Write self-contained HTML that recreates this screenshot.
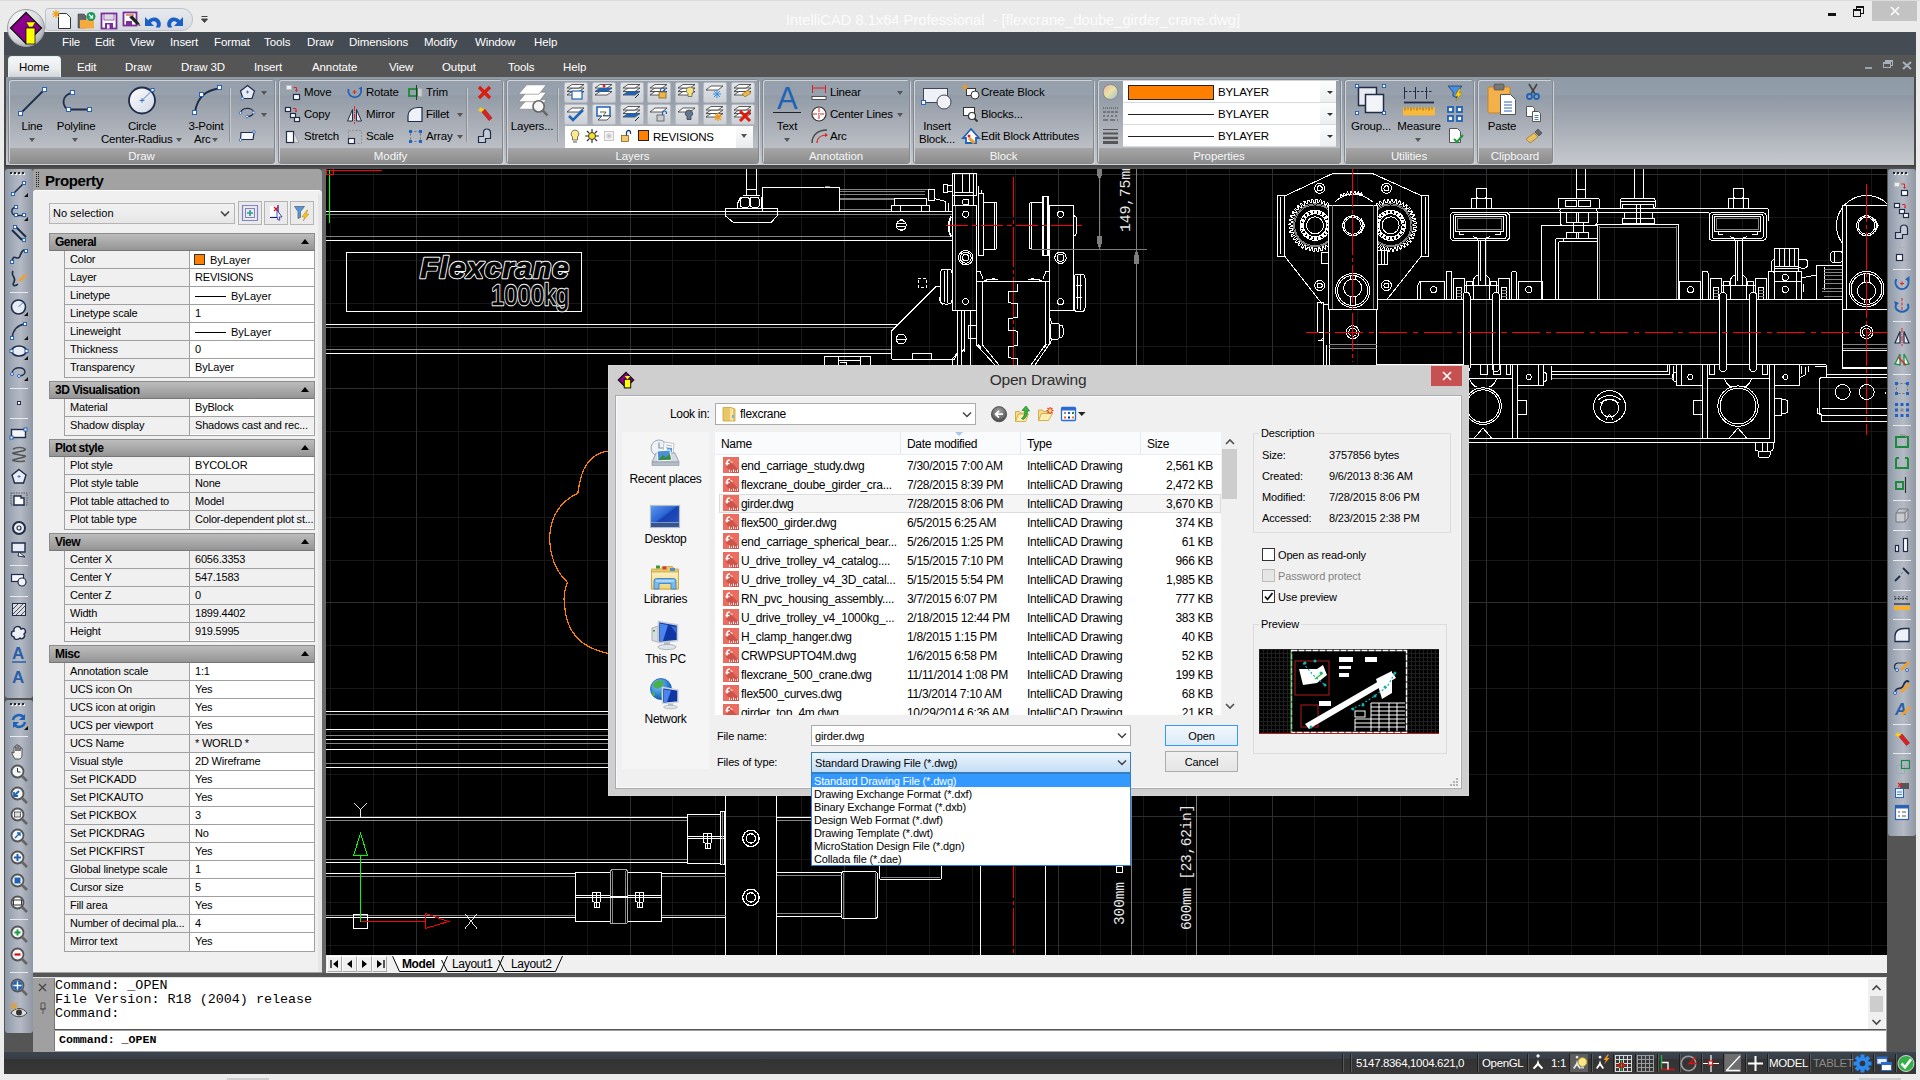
<!DOCTYPE html>
<html lang="en"><head><meta charset="utf-8"><title>IntelliCAD 8.1x64 Professional - [flexcrane_doube_girder_crane.dwg]</title>
<style>
*{box-sizing:border-box;margin:0;padding:0}
html,body{width:1920px;height:1080px;overflow:hidden;background:#ececec;font-family:"Liberation Sans",sans-serif;font-size:12px;color:#000}
.a{position:absolute}
.t{position:absolute;white-space:nowrap;line-height:1}
svg{position:absolute;overflow:visible}
#title{left:0;top:0;width:1920px;height:32px;background:#ebebeb;border-top:1px solid #dcdcdc}
#title .tt{left:0;width:2026px;top:12px;text-align:center;font-size:14.7px;color:#fbfbfb}
#menubar{left:4px;top:32px;width:1912px;height:23px;background:#444b53}
#menubar .t{top:5px;font-size:11.5px;letter-spacing:-0.1px;color:#fff}
#tabrow{left:4px;top:55px;width:1912px;height:23px;background:#555}
#tabrow .t{top:7px;font-size:11.5px;letter-spacing:-0.1px;color:#fff}
#ribbon{left:4px;top:77px;width:1910px;height:88px;background:linear-gradient(#8f9aa7 0%,#939eab 20%,#8e98a4 21.5%,#a2a8b1 49%,#b6bac1 77%,#c6c9cd 100%)}
.pnl{position:absolute;top:2px;height:85px;border:1px solid #848990;border-radius:3px;box-shadow:1px 1px 0 #cfd3d8,inset 1px 1px 0 #cfd3d8;background:linear-gradient(rgba(255,255,255,.04),rgba(255,255,255,.04) 68px,#a6a6a7 68px,#8c8c8d 100%)}
.pnl .lbl{position:absolute;left:0;right:0;bottom:1px;text-align:center;color:#f6f6f6;font-size:11.5px;letter-spacing:-0.1px;line-height:1}
.rt{position:absolute;white-space:nowrap;line-height:1;font-size:11.5px;letter-spacing:-0.2px;color:#000}
.dd{position:absolute;width:0;height:0;border-left:3.5px solid transparent;border-right:3.5px solid transparent;border-top:4px solid #555}
</style></head><body>
<div id="title" class="a"><div class="t tt">IntelliCAD 8.1x64 Professional&nbsp; - [flexcrane_doube_girder_crane.dwg]</div>
<div class="a" style="left:1828px;top:12px;width:8px;height:3px;background:#111"></div>
<div class="a" style="left:1856px;top:5px;width:8px;height:8px;border:1px solid #111;border-top-width:2px"></div>
<div class="a" style="left:1853px;top:8px;width:8px;height:8px;border:1px solid #111;border-top-width:2px;background:#ebebeb"></div>
<div class="a" style="left:1872px;top:0px;width:45px;height:20px;background:#c3c3c3"></div>
<svg style="left:1890px;top:5px" width="10" height="10"><path d="M1 1L9 9M9 1L1 9" stroke="#fff" stroke-width="1.500"/></svg>
<div class="a" style="left:45px;top:7px;width:148px;height:23px;background:linear-gradient(#e6e9ed,#d6dae0);border:1px solid #bfc4ca;border-radius:3px 11px 11px 3px"></div>
<svg style="left:52px;top:8px" width="160" height="22">
<path d="M6.500 4.500h8l4 4v11h-12z" fill="#fff" stroke="#333" stroke-width="1"/><path d="M4 1v8M0 5h8M1.200 2.200l5.600 5.600M6.800 2.200L1.200 7.800" stroke="#f5a01c" stroke-width="1.200"/>
<path d="M26 5h6l2 2v12h-8z" fill="#666" stroke="#444" stroke-width="0.600"/><path d="M28 11h14v8.500H28z" fill="#f4aa3c"/><circle cx="39" cy="7.500" r="4.500" fill="#1c9a5c"/><path d="M37 5.500l3.500 3.500M40.500 6v3h-3" fill="none" stroke="#fff" stroke-width="1.200"/>
<rect x="49.500" y="4.500" width="15" height="15" fill="#fff" stroke="#7a2c9a" stroke-width="1.800"/><rect x="52" y="5" width="10" height="6" fill="#fff" stroke="#7a2c9a" stroke-width="0.800"/><path d="M53 7h8M53 9h8" stroke="#999" stroke-width="0.700"/><rect x="53" y="14" width="8" height="6" fill="#7a2c9a"/><rect x="55" y="15.500" width="2.500" height="4" fill="#fff"/>
<rect x="71.500" y="3.500" width="13" height="13" fill="#fff" stroke="#7a2c9a" stroke-width="1.800"/><path d="M74 6h8" stroke="#c05a1c" stroke-width="1.200"/><rect x="74" y="12" width="6" height="5" fill="#7a2c9a"/><path d="M77 8l8 8l2.500-1.500l-7-8z" fill="#222"/><path d="M85 16l2.500-1.500l1 2.500z" fill="#555"/>
<path d="M93 8v9h9l-3.200-3.200c1.500-2.200 4.500-2.200 5.700 0c0.800 1.600 0.300 3.200-0.800 4.700h4.300c1.500-3 1-6-1-8c-3-3-8-2.500-10.800 0.700z" fill="#1a5fc8"/>
<path d="M131 8v9h-9l3.200-3.200c-1.500-2.200-4.500-2.200-5.700 0c-0.800 1.600-0.300 3.200 0.800 4.700h-4.300c-1.500-3-1-6 1-8c3-3 8-2.500 10.800 0.700z" fill="#1a5fc8"/>
<path d="M149.500 7.500h6M149.500 10h6l-3 3.500z" fill="#444" stroke="#444" stroke-width="1"/>
</svg>
</div>
<div id="menubar" class="a">
<div class="t" style="left:58px">File</div><div class="t" style="left:91px">Edit</div><div class="t" style="left:126px">View</div><div class="t" style="left:166px">Insert</div><div class="t" style="left:210px">Format</div><div class="t" style="left:260px">Tools</div><div class="t" style="left:303px">Draw</div><div class="t" style="left:345px">Dimensions</div><div class="t" style="left:420px">Modify</div><div class="t" style="left:471px">Window</div><div class="t" style="left:530px">Help</div>
</div>
<div id="tabrow" class="a">
<div class="a" style="left:4px;top:1px;width:53px;height:22px;background:linear-gradient(#f6f7f8,#e8eaec 60%,#cdd1d6);border:1px solid #d9f3f3;border-bottom:0;border-radius:4px 4px 0 0"></div>
<div class="t" style="left:15px;color:#000">Home</div><div class="t" style="left:73px">Edit</div><div class="t" style="left:121px">Draw</div><div class="t" style="left:177px">Draw 3D</div><div class="t" style="left:250px">Insert</div><div class="t" style="left:308px">Annotate</div><div class="t" style="left:385px">View</div><div class="t" style="left:438px">Output</div><div class="t" style="left:504px">Tools</div><div class="t" style="left:559px">Help</div>
<div class="a" style="left:1861px;top:12px;width:7px;height:2px;background:#9aa2ad"></div>
<div class="a" style="left:1881px;top:5px;width:8px;height:6px;border:1px solid #a8b0bc;border-top-width:2px"></div><div class="a" style="left:1879px;top:7px;width:8px;height:6px;border:1px solid #a8b0bc;border-top-width:2px;background:#555"></div>
<svg style="left:1898px;top:6px" width="10" height="9"><path d="M1 1L9 8M9 1L1 8" stroke="#a8b0bc" stroke-width="2.200"/></svg>
</div>
<svg style="left:6px;top:8px" width="40" height="40"><defs><radialGradient id="orb" cx="0.35" cy="0.3" r="0.9"><stop offset="0" stop-color="#fff"/><stop offset="0.55" stop-color="#d8dadd"/><stop offset="1" stop-color="#8a8e94"/></radialGradient></defs><circle cx="20" cy="20" r="18.500" fill="url(#orb)" stroke="#9a9ea4" stroke-width="1"/><path d="M20 4.500L35.500 20L20 35.500L4.500 20Z" fill="#8b008b" stroke="#111" stroke-width="1.300"/><path d="M27 23v10l-4 3z" fill="#e8e8e8"/><path d="M20 14h9.500l-3 5h-3.500z" fill="#ff0" stroke="#111" stroke-width="0.500"/><rect x="20" y="20" width="9" height="16" fill="#ff0" stroke="#111" stroke-width="0.800"/></svg>
<div id="ribbon" class="a">
<div class="pnl" style="left:4px;width:267px"><div class="lbl">Draw</div></div>
<div class="pnl" style="left:274px;width:225px"><div class="lbl">Modify</div></div>
<div class="pnl" style="left:502px;width:253px"><div class="lbl">Layers</div></div>
<div class="pnl" style="left:758px;width:148px"><div class="lbl">Annotation</div></div>
<div class="pnl" style="left:909px;width:181px"><div class="lbl">Block</div></div>
<div class="pnl" style="left:1093px;width:244px"><div class="lbl">Properties</div></div>
<div class="pnl" style="left:1340px;width:130px"><div class="lbl">Utilities</div></div>
<div class="pnl" style="left:1473px;width:76px"><div class="lbl">Clipboard</div></div>
<div class="rt" style="left:-32px;width:120px;text-align:center;top:44px">Line</div>
<div class="dd" style="left:25px;top:61px"></div>
<div class="rt" style="left:12px;width:120px;text-align:center;top:44px">Polyline</div>
<div class="dd" style="left:68px;top:61px"></div>
<div class="rt" style="left:78px;width:120px;text-align:center;top:44px">Circle</div>
<div class="rt" style="left:97px;top:57px;">Center-Radius</div>
<div class="dd" style="left:172px;top:61px"></div>
<div class="rt" style="left:142px;width:120px;text-align:center;top:44px">3-Point</div>
<div class="rt" style="left:190px;top:57px;">Arc</div>
<div class="dd" style="left:208px;top:61px"></div>
<div class="a" style="left:225px;top:11px;width:1px;height:54px;background:#8b9199"></div><div class="a" style="left:226px;top:11px;width:1px;height:54px;background:#c5c8cc"></div>
<div class="dd" style="left:257px;top:14px"></div>
<div class="dd" style="left:257px;top:36px"></div>
<svg style="left:13px;top:9px" width="32" height="32"><path d="M3.5 27.5L28 3" stroke="#1f2d4a" stroke-width="1.8" fill="none"/><rect x="1.5" y="25.5" width="4" height="4" fill="#fff" stroke="#2a62b8" stroke-width="1"/><rect x="25.5" y="1.5" width="4" height="4" fill="#fff" stroke="#2a62b8" stroke-width="1"/></svg>
<svg style="left:55px;top:11px" width="36" height="26"><path d="M13.5 5 C2 6 2 21 11 21.5 L31 21.5" stroke="#1f2d4a" stroke-width="1.8" fill="none"/><rect x="11.500" y="2.500" width="4" height="4" fill="#fff" stroke="#2a62b8" stroke-width="1"/><rect x="7.500" y="19.500" width="4" height="4" fill="#fff" stroke="#2a62b8" stroke-width="1"/><rect x="28.500" y="19.500" width="4" height="4" fill="#fff" stroke="#2a62b8" stroke-width="1"/></svg>
<svg style="left:123px;top:8px" width="32" height="32"><defs><linearGradient id="cg" x1="0" y1="0" x2="1" y2="1"><stop offset="0" stop-color="#fff"/><stop offset="1" stop-color="#cfd6e4"/></linearGradient></defs><circle cx="15" cy="15.500" r="13" fill="url(#cg)" stroke="#1f2d4a" stroke-width="1.8"/><path d="M15 15.500L25 5.500" stroke="#2a62b8" stroke-width="0.800"/><path d="M12.500 15.500h5M15 13v5" stroke="#2a62b8" stroke-width="0.800"/><rect x="24" y="3.500" width="3" height="3" fill="#fff" stroke="#2a62b8" stroke-width="1"/></svg>
<svg style="left:186px;top:8px" width="34" height="34"><path d="M5 27 C7 14 14 5 30 3.500" stroke="#1f2d4a" stroke-width="1.800" fill="none"/><rect x="2.500" y="25.500" width="4" height="4" fill="#fff" stroke="#2a62b8" stroke-width="1"/><rect x="9.500" y="7.500" width="4" height="4" fill="#fff" stroke="#2a62b8" stroke-width="1"/><rect x="27.500" y="0.500" width="4" height="4" fill="#fff" stroke="#2a62b8" stroke-width="1"/></svg>
<svg style="left:234px;top:7px" width="20" height="18"><path d="M9.500 1.500L16.500 7L14 14.500H5L2.500 7Z" fill="#e8ecf4" stroke="#1f2d4a" stroke-width="1.200"/><path d="M8 8h3M9.500 6.500v3" stroke="#2a62b8" stroke-width="0.800"/><circle cx="4.500" cy="14.500" r="1.300" fill="#fff" stroke="#2a62b8" stroke-width="0.800"/></svg>
<svg style="left:234px;top:29px" width="20" height="14"><path d="M3 7C3 1 15 1 15.500 6C16 9 12 10.500 9 10.500" fill="none" stroke="#1f2d4a" stroke-width="1.200"/><circle cx="2.500" cy="7" r="1.300" fill="#fff" stroke="#2a62b8" stroke-width="0.800"/><circle cx="15.500" cy="6.500" r="1.300" fill="#fff" stroke="#2a62b8" stroke-width="0.800"/><circle cx="9" cy="10.500" r="1.300" fill="#fff" stroke="#2a62b8" stroke-width="0.800"/></svg>
<svg style="left:234px;top:52px" width="20" height="14"><path d="M3 3.500H16L15 10.500H2.500Z" fill="#f4f6fa" stroke="#1f2d4a" stroke-width="1.200"/><circle cx="16" cy="3" r="1.300" fill="#fff" stroke="#2a62b8" stroke-width="0.800"/><circle cx="2.500" cy="11" r="1.300" fill="#fff" stroke="#2a62b8" stroke-width="0.800"/></svg>
<div class="rt" style="left:300px;top:10px;">Move</div>
<div class="rt" style="left:300px;top:32px;">Copy</div>
<div class="rt" style="left:300px;top:54px;">Stretch</div>
<div class="rt" style="left:362px;top:10px;">Rotate</div>
<div class="rt" style="left:362px;top:32px;">Mirror</div>
<div class="rt" style="left:362px;top:54px;">Scale</div>
<div class="rt" style="left:422px;top:10px;">Trim</div>
<div class="rt" style="left:422px;top:32px;">Fillet</div>
<div class="rt" style="left:422px;top:54px;">Array</div>
<div class="dd" style="left:453px;top:36px"></div>
<div class="dd" style="left:453px;top:58px"></div>
<div class="a" style="left:462px;top:11px;width:1px;height:54px;background:#8b9199"></div><div class="a" style="left:463px;top:11px;width:1px;height:54px;background:#c5c8cc"></div>
<svg style="left:281px;top:7px" width="18" height="18"><rect x="1.500" y="1.500" width="5" height="4" fill="#eee" stroke="#bbb" stroke-width="0.800"/><rect x="8.500" y="10.500" width="6" height="5" fill="#fff" stroke="#1f2d4a" stroke-width="1.200"/><path d="M8.500 3.500h3v3" fill="none" stroke="#d22" stroke-width="1"/><path d="M10 6l1.500 2l1.500-2z" fill="#d22"/></svg>
<svg style="left:280px;top:28px" width="20" height="20"><rect x="1.500" y="2.500" width="5" height="4" fill="#fff" stroke="#1f2d4a" stroke-width="1.200"/><rect x="6.500" y="8.500" width="5" height="4" fill="#fff" stroke="#1f2d4a" stroke-width="1.200"/><rect x="10.500" y="12.500" width="5" height="4" fill="#fff" stroke="#1f2d4a" stroke-width="1.200"/><path d="M9 3.500h3v2" fill="none" stroke="#d22" stroke-width="1"/><path d="M10.500 5.500l1.500 2l1.500-2z" fill="#d22"/></svg>
<svg style="left:281px;top:51px" width="18" height="18"><path d="M8.500 3.500L14 14.500H8.500" fill="#ddd" stroke="#999" stroke-width="0.800"/><rect x="1.500" y="3.500" width="7" height="11" fill="#fff" stroke="#1f2d4a" stroke-width="1.200"/></svg>
<svg style="left:342px;top:7px" width="18" height="18"><path d="M2.500 5A6.500 6.500 0 1 0 15 5" fill="none" stroke="#1e63b5" stroke-width="1.800"/><path d="M12.500 4.500l3.500-2l0 4z" fill="#1e63b5"/><path d="M6.500 8h4M8.500 6v4" stroke="#d22" stroke-width="1"/></svg>
<svg style="left:342px;top:28px" width="18" height="20"><path d="M6.500 4.500V16H1.500Z" fill="#e8e8e8" stroke="#1f2d4a" stroke-width="1"/><path d="M10.500 4.500V16H15.500Z" fill="#e8e8e8" stroke="#1f2d4a" stroke-width="1"/><path d="M8.500 1v18" stroke="#e22" stroke-width="1" stroke-dasharray="5 1 1 1"/></svg>
<svg style="left:342px;top:51px" width="18" height="18"><rect x="2.500" y="2.500" width="13" height="13" fill="none" stroke="#888" stroke-width="0.800" stroke-dasharray="2 1.500"/><rect x="2.500" y="10.500" width="6" height="5" fill="#fff" stroke="#1f2d4a" stroke-width="1.200"/></svg>
<svg style="left:403px;top:7px" width="18" height="18"><rect x="10" y="4.500" width="5" height="8" fill="#ccc" stroke="#aaa" stroke-width="0.800"/><rect x="2" y="5" width="8" height="7" fill="none" stroke="#1c8a3c" stroke-width="1.800"/><path d="M9.500 1v15" stroke="#333" stroke-width="1"/></svg>
<svg style="left:402px;top:28px" width="20" height="20"><path d="M2 2.500h14v14" fill="none" stroke="#999" stroke-width="0.700" stroke-dasharray="1 1"/><path d="M2 16.500V11C2 6 6 2.500 12 2.500H16V16.500Z" fill="#eef2f8" stroke="#1f2d4a" stroke-width="1.200"/></svg>
<svg style="left:403px;top:51px" width="18" height="18"><rect x="3.500" y="3.500" width="10" height="10" fill="none" stroke="#555" stroke-width="0.700" stroke-dasharray="2 2"/><rect x="2" y="2" width="3" height="3" fill="#1f63c6"/><rect x="12" y="2" width="3" height="3" fill="#1f63c6"/><rect x="2" y="12" width="3" height="3" fill="#1f63c6"/><rect x="12" y="12" width="3" height="3" fill="#1f63c6"/></svg>
<svg style="left:472px;top:7px" width="18" height="18"><path d="M3 3L14 14M14 3L3 14" stroke="#dd1c10" stroke-width="3.200"/></svg>
<svg style="left:472px;top:28px" width="18" height="20"><path d="M5.500 6.500l3-2.500l7.500 9l-3 2.500z" fill="#d22" stroke="#911" stroke-width="0.600"/><path d="M2 5l3-3l1 2l3-1l-2 3l-2 1z" fill="#f6d21c"/></svg>
<svg style="left:472px;top:50px" width="18" height="18"><path d="M2.500 15.500v-6h5v-4a3.500 3.500 0 0 1 7 0v6h-5v4z" fill="#c6ccd6" stroke="#1f2d4a" stroke-width="1.200"/></svg>
<div class="rt" style="left:468px;width:120px;text-align:center;top:44px">Layers...</div>
<div class="a" style="left:553px;top:11px;width:1px;height:54px;background:#8b9199"></div><div class="a" style="left:554px;top:11px;width:1px;height:54px;background:#c5c8cc"></div>
<svg style="left:506px;top:3px" width="44" height="40"><g stroke="#777" stroke-width="0.600" fill="#fff"><path d="M8.500 29.200L16.700 19.800H36.300L28.900 29.200Z"/><path d="M8.500 21.700L16.700 12.300H36.300L28.900 21.700Z"/><path d="M8.500 14.200L16.700 4.800H36.300L28.900 14.200Z"/></g><circle cx="28.600" cy="26.400" r="5.600" fill="#f6f6f6" stroke="#666" stroke-width="1.600"/><path d="M32.800 30.600L37.500 35.300" stroke="#666" stroke-width="2.400"/></svg>
<div class="a" style="left:560px;top:5px;width:24px;height:21px;background:linear-gradient(#e2e5e8,#cdd1d6);border:1px solid #b8bcc2;border-radius:2px"></div>
<svg style="left:560px;top:5px" width="24" height="21"><g fill="#fff" stroke="#333" stroke-width="0.800"><path d="M3 13L8 9.500H20L15 13Z"/><path d="M3 9.500L8 6H20L15 9.500Z"/><path d="M3 6L8 2.500H20L15 6Z"/></g><rect x="8" y="9" width="10" height="8" fill="#fff" stroke="#1e63b5" stroke-width="1.200"/></svg>
<div class="a" style="left:588px;top:5px;width:24px;height:21px;background:linear-gradient(#e2e5e8,#cdd1d6);border:1px solid #b8bcc2;border-radius:2px"></div>
<svg style="left:588px;top:5px" width="24" height="21"><g fill="#fff" stroke="#333" stroke-width="0.800"><path d="M3 13L8 9.500H20L15 13Z"/><path d="M3 9.500L8 6H20L15 9.500Z"/><path d="M3 6L8 2.500H20L15 6Z"/></g><path d="M3 9.500L8 6H20L15 9.500Z" fill="#1e63b5"/><circle cx="12" cy="4" r="1.500" fill="#d22"/></svg>
<div class="a" style="left:616px;top:5px;width:24px;height:21px;background:linear-gradient(#e2e5e8,#cdd1d6);border:1px solid #b8bcc2;border-radius:2px"></div>
<svg style="left:616px;top:5px" width="24" height="21"><g fill="#fff" stroke="#333" stroke-width="0.800"><path d="M3 13L8 9.500H20L15 13Z"/><path d="M3 9.500L8 6H20L15 9.500Z"/><path d="M3 6L8 2.500H20L15 6Z"/></g><path d="M3 13L8 9.500H20L15 13Z" fill="#1e63b5"/><path d="M15 16l4-4" stroke="#222"/></svg>
<div class="a" style="left:643px;top:5px;width:24px;height:21px;background:linear-gradient(#e2e5e8,#cdd1d6);border:1px solid #b8bcc2;border-radius:2px"></div>
<svg style="left:643px;top:5px" width="24" height="21"><g fill="#fff" stroke="#333" stroke-width="0.800"><path d="M3 13L8 9.500H20L15 13Z"/><path d="M3 9.500L8 6H20L15 9.500Z"/><path d="M3 6L8 2.500H20L15 6Z"/></g><rect x="12" y="10" width="7" height="6" fill="#e8b64c" stroke="#8a6414" stroke-width="0.800"/><path d="M13.500 10v-2a2 2 0 0 1 4 0v2" fill="none" stroke="#1e63b5" stroke-width="1.200"/></svg>
<div class="a" style="left:671px;top:5px;width:24px;height:21px;background:linear-gradient(#e2e5e8,#cdd1d6);border:1px solid #b8bcc2;border-radius:2px"></div>
<svg style="left:671px;top:5px" width="24" height="21"><g fill="#fff" stroke="#333" stroke-width="0.800"><path d="M3 13L8 9.500H20L15 13Z"/><path d="M3 9.500L8 6H20L15 9.500Z"/><path d="M3 6L8 2.500H20L15 6Z"/></g><path d="M15 5a3.500 3.500 0 0 1 2 6.500v3h-4v-3a3.500 3.500 0 0 1 2-6.500z" fill="#f6e27a" stroke="#555" stroke-width="0.700"/></svg>
<div class="a" style="left:699px;top:5px;width:24px;height:21px;background:linear-gradient(#e2e5e8,#cdd1d6);border:1px solid #b8bcc2;border-radius:2px"></div>
<svg style="left:699px;top:5px" width="24" height="21"><path d="M3 8L8 4H20L15 8Z" fill="#fff" stroke="#333" stroke-width="0.800"/><path d="M14 8v8M10 12h8M11 9l6 6M17 9l-6 6" stroke="#3b8ede" stroke-width="1"/></svg>
<div class="a" style="left:727px;top:5px;width:24px;height:21px;background:linear-gradient(#e2e5e8,#cdd1d6);border:1px solid #b8bcc2;border-radius:2px"></div>
<svg style="left:727px;top:5px" width="24" height="21"><g fill="#fff" stroke="#333" stroke-width="0.800"><path d="M3 13L8 9.500H20L15 13Z"/><path d="M3 9.500L8 6H20L15 9.500Z"/><path d="M3 6L8 2.500H20L15 6Z"/></g><path d="M11 12l6-4l3 3l-6 4z" fill="#e8b64c" stroke="#8a6414" stroke-width="0.600"/></svg>
<div class="a" style="left:560px;top:27px;width:24px;height:21px;background:linear-gradient(#e2e5e8,#cdd1d6);border:1px solid #b8bcc2;border-radius:2px"></div>
<svg style="left:560px;top:27px" width="24" height="21"><path d="M3 8L8 4H20L15 8Z" fill="#fff" stroke="#333" stroke-width="0.800"/><path d="M5 12l4 4l10-10" fill="none" stroke="#1e63b5" stroke-width="2.500"/></svg>
<div class="a" style="left:588px;top:27px;width:24px;height:21px;background:linear-gradient(#e2e5e8,#cdd1d6);border:1px solid #b8bcc2;border-radius:2px"></div>
<svg style="left:588px;top:27px" width="24" height="21"><rect x="5" y="3" width="13" height="9" fill="#fff" stroke="#1e63b5" stroke-width="1.500"/><path d="M8 8h6l-3 4h8l-4 4H6l4-4" fill="#fff" stroke="#333" stroke-width="0.800"/></svg>
<div class="a" style="left:616px;top:27px;width:24px;height:21px;background:linear-gradient(#e2e5e8,#cdd1d6);border:1px solid #b8bcc2;border-radius:2px"></div>
<svg style="left:616px;top:27px" width="24" height="21"><g fill="#fff" stroke="#333" stroke-width="0.800"><path d="M3 13L8 9.500H20L15 13Z"/><path d="M3 9.500L8 6H20L15 9.500Z"/><path d="M3 6L8 2.500H20L15 6Z"/></g><path d="M3 13L8 9.500H20L15 13Z" fill="#1e63b5"/><path d="M15 17l4-4" stroke="#222"/></svg>
<div class="a" style="left:643px;top:27px;width:24px;height:21px;background:linear-gradient(#e2e5e8,#cdd1d6);border:1px solid #b8bcc2;border-radius:2px"></div>
<svg style="left:643px;top:27px" width="24" height="21"><path d="M3 8L8 4H20L15 8Z" fill="#fff" stroke="#333" stroke-width="0.800"/><rect x="10" y="11" width="7" height="6" fill="#c8ccd0" stroke="#555" stroke-width="0.800"/><path d="M15.500 11v-2a2 2 0 0 1 4 0v1" fill="none" stroke="#1e63b5" stroke-width="1.200"/></svg>
<div class="a" style="left:671px;top:27px;width:24px;height:21px;background:linear-gradient(#e2e5e8,#cdd1d6);border:1px solid #b8bcc2;border-radius:2px"></div>
<svg style="left:671px;top:27px" width="24" height="21"><path d="M3 8L8 4H20L15 8Z" fill="#fff" stroke="#333" stroke-width="0.800"/><path d="M14 6a3.500 3.500 0 0 1 2 6.500v3h-4v-3a3.500 3.500 0 0 1 2-6.500z" fill="#5f7690" stroke="#333" stroke-width="0.700"/></svg>
<div class="a" style="left:699px;top:27px;width:24px;height:21px;background:linear-gradient(#e2e5e8,#cdd1d6);border:1px solid #b8bcc2;border-radius:2px"></div>
<svg style="left:699px;top:27px" width="24" height="21"><g fill="#fff" stroke="#333" stroke-width="0.800"><path d="M3 13L8 9.500H20L15 13Z"/><path d="M3 9.500L8 6H20L15 9.500Z"/><path d="M3 6L8 2.500H20L15 6Z"/></g><path d="M15 9v8M11 13h8M12 10l6 6M18 10l-6 6" stroke="#f09a1c" stroke-width="1.200"/></svg>
<div class="a" style="left:727px;top:27px;width:24px;height:21px;background:linear-gradient(#e2e5e8,#cdd1d6);border:1px solid #b8bcc2;border-radius:2px"></div>
<svg style="left:727px;top:27px" width="24" height="21"><g fill="#fff" stroke="#333" stroke-width="0.800"><path d="M3 13L8 9.500H20L15 13Z"/><path d="M3 9.500L8 6H20L15 9.500Z"/><path d="M3 6L8 2.500H20L15 6Z"/></g><path d="M9 7l10 10M19 7l-10 10" stroke="#dd1c10" stroke-width="3"/></svg>
<div class="a" style="left:561px;top:49px;width:188px;height:22px;background:#fff"></div>
<div class="a" style="left:732px;top:49px;width:17px;height:22px;background:linear-gradient(#fdfdfd,#e8eaec)"></div>
<svg style="left:564px;top:51px" width="80" height="18"><path d="M7 2a4 4 0 0 1 2.500 7v3h-5v-3a4 4 0 0 1 2.500-7z" fill="#fbe98a" stroke="#555" stroke-width="0.800"/><path d="M5 14h4" stroke="#555"/><circle cx="24" cy="8" r="3.500" fill="#f8e21c" stroke="#333" stroke-width="1"/><path d="M24 1v3M24 12v3M17 8h3M28 8h3M19 3l2 2M27 11l2 2M29 3l-2 2M19 13l2-2" stroke="#333" stroke-width="1.200"/><rect x="36.500" y="3.500" width="9" height="9" fill="#f2f2f2" stroke="#bbb" stroke-width="0.800"/><path d="M41 5v6M38 8h6M39 6l4 4M43 6l-4 4" stroke="#bbb" stroke-width="0.800"/><rect x="53.500" y="7.500" width="7" height="6" fill="#f0c878" stroke="#8a6414" stroke-width="0.800"/><path d="M58.500 7.500v-3a2 2 0 0 1 4 0v1.500" fill="none" stroke="#1e3c78" stroke-width="1.300"/><rect x="70.500" y="2.500" width="10" height="10" fill="#ff7f00" stroke="#222" stroke-width="1"/></svg>
<div class="rt" style="left:649px;top:55px;">REVISIONS</div>
<div class="dd" style="left:737px;top:57px"></div>
<div class="rt" style="left:723px;width:120px;text-align:center;top:44px">Text</div>
<div class="dd" style="left:780px;top:61px"></div>
<div class="t" style="left:773px;top:6px;font-size:31px;color:#1e63b5;">A</div>
<div class="a" style="left:769px;top:35px;width:28px;height:1px;background:#222"></div>
<div class="rt" style="left:826px;top:10px;">Linear</div>
<div class="rt" style="left:826px;top:32px;">Center Lines</div>
<div class="rt" style="left:826px;top:54px;">Arc</div>
<div class="dd" style="left:893px;top:14px"></div>
<div class="dd" style="left:893px;top:36px"></div>
<svg style="left:806px;top:7px" width="18" height="18"><path d="M2.500 1v8M15.500 1v8M2.500 4h13" stroke="#d22" stroke-width="1" fill="none"/><rect x="2" y="12.500" width="14" height="3" fill="#fff" stroke="#333" stroke-width="0.800"/></svg>
<svg style="left:806px;top:28px" width="18" height="18"><circle cx="9" cy="9" r="7" fill="#fff" stroke="#333" stroke-width="1.200"/><path d="M3 9h12M9 3v12" stroke="#d22" stroke-width="1" stroke-dasharray="4 1 1 1"/></svg>
<svg style="left:806px;top:50px" width="20" height="18"><path d="M2 16C2 8 8 3 17 3" fill="none" stroke="#444" stroke-width="1.400"/><path d="M7 16C7 11 11 8 17 8" fill="none" stroke="#d22" stroke-width="1.200"/><path d="M15 6l3 2l-3 2z" fill="#d22"/></svg>
<div class="rt" style="left:873px;width:120px;text-align:center;top:44px">Insert</div>
<div class="rt" style="left:873px;width:120px;text-align:center;top:57px">Block...</div>
<div class="rt" style="left:977px;top:10px;">Create Block</div>
<div class="rt" style="left:977px;top:32px;">Blocks...</div>
<div class="rt" style="left:977px;top:54px;">Edit Block Attributes</div>
<svg style="left:916px;top:7px" width="36" height="30"><rect x="3.500" y="4.500" width="24" height="14" fill="#eef1f6" stroke="#445" stroke-width="1"/><circle cx="24" cy="18" r="7" fill="#eef1f6" stroke="#445" stroke-width="1"/><rect x="1.500" y="16.500" width="4" height="4" fill="#fff" stroke="#2a62b8"/></svg>
<svg style="left:957px;top:6px" width="20" height="18"><rect x="5.500" y="5.500" width="9" height="7" fill="#fff" stroke="#333"/><circle cx="14" cy="12" r="4" fill="#fff" stroke="#333"/><path d="M4 1v7M1 4h6M2 2l4 4M6 2l-4 4" stroke="#f09a1c" stroke-width="1"/></svg>
<svg style="left:957px;top:28px" width="20" height="18"><rect x="2.500" y="2.500" width="11" height="8" fill="#fff" stroke="#333"/><circle cx="11" cy="11" r="3.500" fill="#fff" stroke="#333" stroke-width="1.200"/><path d="M13.500 13.500l3 3" stroke="#333" stroke-width="1.800"/></svg>
<svg style="left:957px;top:49px" width="20" height="20"><path d="M2 12L10 3l8 9h-3v5H5v-5z" fill="#fff" stroke="#1e63b5" stroke-width="1.800"/><path d="M9 11l6 5l-3 2l-5-5z" fill="#f0a030"/><circle cx="8" cy="10" r="1.500" fill="#d22"/></svg>
<svg style="left:1098px;top:6px" width="18" height="18"><defs><linearGradient id="cw" x1="0" y1="0" x2="1" y2="1"><stop offset="0" stop-color="#f4b0b0"/><stop offset="0.500" stop-color="#e8e4a0"/><stop offset="1" stop-color="#9ab4e8"/></linearGradient></defs><circle cx="8.500" cy="9" r="7.500" fill="url(#cw)" stroke="#888"/></svg>
<svg style="left:1098px;top:29px" width="18" height="16"><path d="M1 2h15" stroke="#444" stroke-dasharray="1 1"/><path d="M1 6h15" stroke="#444" stroke-dasharray="3 1"/><path d="M1 10h15" stroke="#444" stroke-dasharray="2 2"/><path d="M1 14h15" stroke="#444" stroke-dasharray="5 2"/></svg>
<svg style="left:1098px;top:51px" width="18" height="16"><path d="M1 1.500h15" stroke="#555" stroke-width="1"/><path d="M1 5.500h15" stroke="#555" stroke-width="2"/><path d="M1 10h15" stroke="#555" stroke-width="2.500"/><path d="M1 14.500h15" stroke="#555" stroke-width="3"/></svg>
<div class="a" style="left:1119px;top:4px;width:213px;height:22px;background:#fff;border-bottom:1px solid #d8dadc"></div>
<div class="a" style="left:1316px;top:4px;width:16px;height:21px;background:linear-gradient(#fdfdfd,#eceef0)"></div>
<div class="rt" style="left:1214px;top:10px;">BYLAYER</div>
<div class="dd" style="left:1323px;top:14px;border-left-width:3px;border-right-width:3px;border-top-width:3px;border-top-color:#333"></div>
<div class="a" style="left:1119px;top:26px;width:213px;height:22px;background:#fff;border-bottom:1px solid #d8dadc"></div>
<div class="a" style="left:1316px;top:26px;width:16px;height:21px;background:linear-gradient(#fdfdfd,#eceef0)"></div>
<div class="rt" style="left:1214px;top:32px;">BYLAYER</div>
<div class="dd" style="left:1323px;top:36px;border-left-width:3px;border-right-width:3px;border-top-width:3px;border-top-color:#333"></div>
<div class="a" style="left:1119px;top:48px;width:213px;height:22px;background:#fff;border-bottom:1px solid #d8dadc"></div>
<div class="a" style="left:1316px;top:48px;width:16px;height:21px;background:linear-gradient(#fdfdfd,#eceef0)"></div>
<div class="rt" style="left:1214px;top:54px;">BYLAYER</div>
<div class="dd" style="left:1323px;top:58px;border-left-width:3px;border-right-width:3px;border-top-width:3px;border-top-color:#333"></div>
<div class="a" style="left:1124px;top:8px;width:86px;height:15px;background:#ff7f00;border:1px solid #222"></div>
<div class="a" style="left:1124px;top:37px;width:86px;height:1px;background:#222"></div>
<div class="a" style="left:1124px;top:59px;width:86px;height:1px;background:#222"></div>
<div class="rt" style="left:1307px;width:120px;text-align:center;top:44px">Group...</div>
<div class="rt" style="left:1355px;width:120px;text-align:center;top:44px">Measure</div>
<div class="dd" style="left:1411px;top:61px"></div>
<svg style="left:1350px;top:6px" width="36" height="34"><rect x="4.500" y="4.500" width="18" height="18" fill="#e8ecf2" stroke="#1f2d4a" stroke-width="1.500"/><rect x="11.500" y="11.500" width="18" height="18" fill="#f2f4f8" stroke="#1f2d4a" stroke-width="1.500"/><rect x="1.500" y="1.500" width="3" height="3" fill="#fff" stroke="#2a62b8" stroke-width="1"/><rect x="28.500" y="1.500" width="3" height="3" fill="#fff" stroke="#2a62b8" stroke-width="1"/><rect x="1.500" y="28.500" width="3" height="3" fill="#fff" stroke="#2a62b8" stroke-width="1"/><rect x="28.500" y="28.500" width="3" height="3" fill="#fff" stroke="#2a62b8" stroke-width="1"/></svg>
<svg style="left:1396px;top:7px" width="38" height="34"><path d="M4.500 3v12M15.500 3v12M26.500 3v12" stroke="#1f2d4a" stroke-width="1"/><path d="M5 7.500h28" stroke="#1f2d4a" stroke-width="1" stroke-dasharray="2.500 1.500"/><path d="M4 18.500h30" stroke="#1f2d4a" stroke-width="1.800"/><rect x="3" y="23.500" width="32" height="8" fill="#f8b83c"/><path d="M5 23.500v3M8 23.500v2M11 23.500v3M14 23.500v2M17 23.500v3M20 23.500v2M23 23.500v3M26 23.500v2M29 23.500v3M32 23.500v2" stroke="#7a5800" stroke-width="0.800"/></svg>
<svg style="left:1442px;top:6px" width="20" height="18"><path d="M2 3h14l-5 6v6l-4-2v-4z" fill="#4a8edc" stroke="#1e3c78" stroke-width="0.800"/><path d="M13 6l-4 7h3l-2 5l6-8h-3l2-4z" fill="#f6d21c" stroke="#a07800" stroke-width="0.500"/></svg>
<svg style="left:1442px;top:28px" width="20" height="18"><g fill="#fff" stroke="#1e63b5" stroke-width="1.800"><rect x="2" y="2" width="5" height="5"/><rect x="11" y="2" width="5" height="5"/><rect x="2" y="11" width="5" height="5"/><rect x="11" y="11" width="5" height="5"/></g></svg>
<svg style="left:1442px;top:50px" width="20" height="18"><path d="M3.500 1.500h8l3 3v11h-11z" fill="#fff" stroke="#555"/><path d="M8 12l3 3l6-7" fill="none" stroke="#1c9a3c" stroke-width="2"/></svg>
<div class="rt" style="left:1438px;width:120px;text-align:center;top:44px">Paste</div>
<svg style="left:1482px;top:5px" width="34" height="36"><rect x="2" y="5" width="22" height="26" rx="1.500" fill="#f4b04a" stroke="#c07c14" stroke-width="0.800"/><rect x="8" y="2" width="10" height="6" rx="1" fill="#777" stroke="#444" stroke-width="0.600"/><path d="M14.500 12.500h10l5 5v15h-15z" fill="#fff" stroke="#555" stroke-width="1"/><path d="M18 20h8M18 23h8M18 26h8M18 29h8" stroke="#2a62b8" stroke-width="1"/></svg>
<svg style="left:1520px;top:6px" width="20" height="18"><path d="M5 1l6 10M13 1L7 11" stroke="#444" stroke-width="1.600"/><circle cx="5.500" cy="13.500" r="2.500" fill="none" stroke="#1e63b5" stroke-width="1.800"/><circle cx="12.500" cy="13.500" r="2.500" fill="none" stroke="#1e63b5" stroke-width="1.800"/></svg>
<svg style="left:1520px;top:28px" width="20" height="18"><path d="M2.500 1.500h6l2 2v8h-8z" fill="#fff" stroke="#555"/><path d="M8.500 6.500h6l2 2v8h-8z" fill="#fff" stroke="#555"/><path d="M10.500 10.500h4M10.500 12.500h4M10.500 14.500h4" stroke="#2a62b8" stroke-width="0.800"/></svg>
<svg style="left:1520px;top:50px" width="20" height="18"><path d="M2 12l8-6l4 4l-8 6z" fill="#e8c060" stroke="#8a6414" stroke-width="0.600"/><path d="M11 5l3-3l4 4l-3 3z" fill="#666" stroke="#333" stroke-width="0.600"/></svg>
</div>
<div class="a" style="left:4px;top:165px;width:1912px;height:887px;background:linear-gradient(#3e3e3e,#555 4px)"></div>
<div class="a ribside" style="left:4px;top:77px;width:2px;height:88px;background:#484848"></div><div class="a ribside" style="left:1914px;top:77px;width:2px;height:88px;background:#4c4c4c"></div>
<div class="a" style="left:5px;top:169px;width:28px;height:529px;border-radius:3px;background:linear-gradient(90deg,#8e98a6 0%,#a9b1bd 35%,#b4bac4 55%,#8f97a3 100%)"></div>
<div class="a" style="left:5px;top:700px;width:28px;height:333px;border-radius:3px;background:linear-gradient(90deg,#8e98a6 0%,#a9b1bd 35%,#b4bac4 55%,#8f97a3 100%)"></div>
<div class="a" style="left:11px;top:173px;width:2px;height:2px;background:#fff"></div><div class="a" style="left:10px;top:172px;width:2px;height:2px;background:#222"></div>
<div class="a" style="left:15px;top:173px;width:2px;height:2px;background:#fff"></div><div class="a" style="left:14px;top:172px;width:2px;height:2px;background:#222"></div>
<div class="a" style="left:19px;top:173px;width:2px;height:2px;background:#fff"></div><div class="a" style="left:18px;top:172px;width:2px;height:2px;background:#222"></div>
<div class="a" style="left:23px;top:173px;width:2px;height:2px;background:#fff"></div><div class="a" style="left:22px;top:172px;width:2px;height:2px;background:#222"></div>
<div class="a" style="left:11px;top:704px;width:2px;height:2px;background:#fff"></div><div class="a" style="left:10px;top:703px;width:2px;height:2px;background:#222"></div>
<div class="a" style="left:15px;top:704px;width:2px;height:2px;background:#fff"></div><div class="a" style="left:14px;top:703px;width:2px;height:2px;background:#222"></div>
<div class="a" style="left:19px;top:704px;width:2px;height:2px;background:#fff"></div><div class="a" style="left:18px;top:703px;width:2px;height:2px;background:#222"></div>
<div class="a" style="left:23px;top:704px;width:2px;height:2px;background:#fff"></div><div class="a" style="left:22px;top:703px;width:2px;height:2px;background:#222"></div>
<div class="a" style="left:10px;top:292px;width:18px;height:1px;background:#e8eaee"></div>
<div class="a" style="left:10px;top:388px;width:18px;height:1px;background:#e8eaee"></div>
<div class="a" style="left:10px;top:418px;width:18px;height:1px;background:#e8eaee"></div>
<div class="a" style="left:10px;top:565px;width:18px;height:1px;background:#e8eaee"></div>
<div class="a" style="left:10px;top:596px;width:18px;height:1px;background:#e8eaee"></div>
<div class="a" style="left:10px;top:736px;width:18px;height:1px;background:#e8eaee"></div>
<div class="a" style="left:10px;top:919px;width:18px;height:1px;background:#e8eaee"></div>
<div class="a" style="left:10px;top:972px;width:18px;height:1px;background:#e8eaee"></div>
<svg style="left:9px;top:178px" width="20" height="20"><path d="M4 16L15 5" stroke="#1f2d4a" stroke-width="1.600"/><rect x="2.500" y="14.500" width="3" height="3" fill="#fff" stroke="#2a62b8" stroke-width="1"/><rect x="13.500" y="3.500" width="3" height="3" fill="#fff" stroke="#2a62b8" stroke-width="1"/><path d="M15 19h4v-4z" fill="#111"/></svg>
<svg style="left:9px;top:202px" width="20" height="20"><path d="M7 5C1 6 2 13 7 13.500h8" fill="none" stroke="#1f2d4a" stroke-width="1.400"/><rect x="5.500" y="3.500" width="3" height="3" fill="#fff" stroke="#2a62b8" stroke-width="1"/><rect x="5.500" y="11.500" width="3" height="3" fill="#fff" stroke="#2a62b8" stroke-width="1"/><rect x="13.500" y="11.500" width="3" height="3" fill="#fff" stroke="#2a62b8" stroke-width="1"/><path d="M15 19h4v-4z" fill="#111"/></svg>
<svg style="left:9px;top:224px" width="20" height="20"><path d="M3 6L13 16M7 3L17 13" stroke="#1f2d4a" stroke-width="2"/><rect x="4.500" y="1.500" width="3" height="3" fill="#fff" stroke="#2a62b8" stroke-width="1"/><rect x="13.500" y="14.500" width="3" height="3" fill="#fff" stroke="#2a62b8" stroke-width="1"/></svg>
<svg style="left:9px;top:246px" width="20" height="20"><path d="M3 16C4 6 9 16 11 10S15 3 17 5" fill="none" stroke="#1f2d4a" stroke-width="1.600"/><rect x="1.500" y="14.500" width="3" height="3" fill="#fff" stroke="#2a62b8" stroke-width="1"/><rect x="15.500" y="3.500" width="3" height="3" fill="#fff" stroke="#2a62b8" stroke-width="1"/></svg>
<svg style="left:9px;top:268px" width="20" height="20"><path d="M4 3C1 8 8 9 5 14S7 18 9 16" fill="none" stroke="#1f2d4a" stroke-width="1.600"/><path d="M9 12l7-6l2 2l-7 6z" fill="#f0a030"/></svg>
<svg style="left:9px;top:297px" width="20" height="20"><circle cx="9.500" cy="10" r="7" fill="#e8ecf4" stroke="#1f2d4a" stroke-width="1.600"/><path d="M9.500 10l5-5" stroke="#2a62b8" stroke-width="0.800"/><path d="M15 19h4v-4z" fill="#111"/></svg>
<svg style="left:9px;top:321px" width="20" height="20"><path d="M3 17C4 9 9 4 16 3" fill="none" stroke="#1f2d4a" stroke-width="1.400"/><rect x="1.500" y="15.500" width="3" height="3" fill="#fff" stroke="#2a62b8" stroke-width="1"/><rect x="14.500" y="1.500" width="3" height="3" fill="#fff" stroke="#2a62b8" stroke-width="1"/><path d="M15 19h4v-4z" fill="#111"/></svg>
<svg style="left:9px;top:341px" width="20" height="20"><ellipse cx="10" cy="10" rx="7.500" ry="5" fill="#e8ecf4" stroke="#1f2d4a" stroke-width="1.600"/><rect x="1" y="8.500" width="3" height="3" fill="#fff" stroke="#2a62b8" stroke-width="1"/><rect x="16" y="8.500" width="3" height="3" fill="#fff" stroke="#2a62b8" stroke-width="1"/><path d="M15 19h4v-4z" fill="#111"/></svg>
<svg style="left:9px;top:362px" width="20" height="20"><path d="M3 12C3 4 16 4 16 10C16 13 12 14 10 14" fill="none" stroke="#1f2d4a" stroke-width="1.400"/><circle cx="3" cy="12" r="1.500" fill="#fff" stroke="#2a62b8" stroke-width="1"/><circle cx="10" cy="14" r="1.500" fill="#fff" stroke="#2a62b8" stroke-width="1"/><path d="M15 19h4v-4z" fill="#111"/></svg>
<svg style="left:9px;top:393px" width="20" height="20"><rect x="8.500" y="8.500" width="3" height="3" fill="#fff" stroke="#1f2d4a" stroke-width="1"/></svg>
<svg style="left:9px;top:423px" width="20" height="20"><rect x="2.500" y="6.500" width="14" height="8" fill="#f4f6fa" stroke="#1f2d4a" stroke-width="1.400"/><rect x="15" y="5" width="3" height="3" fill="#fff" stroke="#2a62b8" stroke-width="1"/><rect x="1" y="13" width="3" height="3" fill="#fff" stroke="#2a62b8" stroke-width="1"/></svg>
<svg style="left:9px;top:445px" width="20" height="20"><path d="M4 4c4-2 10-2 12 0s-10 3-12 4s10 2 12 3s-10 3-12 4s8 2 12 1" fill="none" stroke="#555" stroke-width="1.600"/></svg>
<svg style="left:9px;top:467px" width="20" height="20"><path d="M10 2.500L17 8L14.500 16H5.500L3 8Z" fill="#e8ecf4" stroke="#1f2d4a" stroke-width="1.400"/><path d="M8.500 9.500h3M10 8v3" stroke="#2a62b8" stroke-width="0.800"/></svg>
<svg style="left:9px;top:489px" width="20" height="20"><path d="M2 4h16v12H2z" fill="none" stroke="#444" stroke-width="0.800" stroke-dasharray="1.500 1"/><path d="M5 7h7v2h3v7H5z" fill="#fff" stroke="#1f2d4a" stroke-width="1.400"/></svg>
<svg style="left:9px;top:518px" width="20" height="20"><circle cx="10" cy="10" r="6" fill="#eee" stroke="#1f2d4a" stroke-width="2"/><circle cx="10" cy="10" r="2" fill="#fff" stroke="#1f2d4a" stroke-width="1.200"/></svg>
<svg style="left:9px;top:540px" width="20" height="20"><path d="M3 3h13v9H3z" fill="#e8ecf4" stroke="#1f2d4a" stroke-width="1.400"/><path d="M10 12l6 5l-7-1z" fill="#fff" stroke="#1f2d4a" stroke-width="1"/></svg>
<svg style="left:9px;top:570px" width="20" height="20"><rect x="2.500" y="4.500" width="12" height="7" fill="#f4f6fa" stroke="#1f2d4a" stroke-width="1.200"/><circle cx="13" cy="12" r="4" fill="#f4f6fa" stroke="#1f2d4a" stroke-width="1.200"/></svg>
<svg style="left:9px;top:600px" width="20" height="20"><rect x="3.500" y="3.500" width="13" height="12" fill="#ddd" stroke="#1f2d4a" stroke-width="1"/><path d="M4 9l5-5M4 14l10-10M7 15l9-9M12 15l4-4" stroke="#1f2d4a" stroke-width="0.800"/></svg>
<svg style="left:9px;top:623px" width="20" height="20"><path d="M5 14C1 13 2 8 5 8C4 3 11 2 12 6C16 4 18 9 15 11C17 14 13 17 11 15C9 17 5 17 5 14Z" fill="#eef0f6" stroke="#1f2d4a" stroke-width="1.400"/></svg>
<svg style="left:9px;top:644px" width="20" height="20"><text x="3" y="15" font-family="Liberation Sans" font-weight="bold" font-size="17" fill="#2a5fa8">A</text><path d="M3 18h14" stroke="#2a5fa8" stroke-width="1.500"/></svg>
<svg style="left:9px;top:667px" width="20" height="20"><text x="3" y="16" font-family="Liberation Sans" font-weight="bold" font-size="17" fill="#2a5fa8">A</text></svg>
<svg style="left:9px;top:711px" width="20" height="20"><path d="M4 9a6 6 0 0 1 11-2" fill="none" stroke="#1e63b5" stroke-width="2.500"/><path d="M16 3v6h-6z" fill="#1e63b5"/><path d="M16 11a6 6 0 0 1-11 2" fill="none" stroke="#1e63b5" stroke-width="2.500"/><path d="M4 17v-6h6z" fill="#1e63b5"/><path d="M15 19h4v-4z" fill="#111"/></svg>
<svg style="left:9px;top:742px" width="20" height="20"><path d="M6 17c-2-3-3-5-3-7l2 1V5h2v4V3h2v6V4h2v5V6h2v7c0 2-1 3-2 4z" fill="#f4f4f4" stroke="#444" stroke-width="0.900"/></svg>
<svg style="left:9px;top:763px" width="20" height="20"><circle cx="8.500" cy="8.500" r="6" fill="#f4f6f8" stroke="#555" stroke-width="1.800"/><path d="M13 13l5 5" stroke="#666" stroke-width="2.600"/><path d="M8.500 5v4h3" fill="none" stroke="#333" stroke-width="1"/></svg>
<svg style="left:9px;top:785px" width="20" height="20"><circle cx="8.500" cy="8.500" r="6" fill="#f4f6f8" stroke="#555" stroke-width="1.800"/><path d="M13 13l5 5" stroke="#666" stroke-width="2.600"/><path d="M5 11l5-5M5 7v4h4" fill="none" stroke="#1e63b5" stroke-width="1.800"/></svg>
<svg style="left:9px;top:806px" width="20" height="20"><circle cx="8.500" cy="8.500" r="6" fill="#f4f6f8" stroke="#555" stroke-width="1.800"/><path d="M13 13l5 5" stroke="#666" stroke-width="2.600"/><rect x="5.500" y="6" width="6" height="5" fill="#ddd" stroke="#444" stroke-width="0.800"/></svg>
<svg style="left:9px;top:827px" width="20" height="20"><circle cx="8.500" cy="8.500" r="6" fill="#f4f6f8" stroke="#555" stroke-width="1.800"/><path d="M13 13l5 5" stroke="#666" stroke-width="2.600"/><path d="M6 11l5-5M8 6h3v3" fill="none" stroke="#1e63b5" stroke-width="1.400"/></svg>
<svg style="left:9px;top:849px" width="20" height="20"><circle cx="8.500" cy="8.500" r="6" fill="#f4f6f8" stroke="#555" stroke-width="1.800"/><path d="M13 13l5 5" stroke="#666" stroke-width="2.600"/><path d="M5 8.500h7M8.500 5v7" stroke="#1e63b5" stroke-width="2"/></svg>
<svg style="left:9px;top:872px" width="20" height="20"><circle cx="8.500" cy="8.500" r="6" fill="#f4f6f8" stroke="#555" stroke-width="1.800"/><path d="M13 13l5 5" stroke="#666" stroke-width="2.600"/><rect x="5.500" y="5.500" width="6" height="6" fill="#1e63b5"/></svg>
<svg style="left:9px;top:894px" width="20" height="20"><circle cx="8.500" cy="8.500" r="6" fill="#f4f6f8" stroke="#555" stroke-width="1.800"/><path d="M13 13l5 5" stroke="#666" stroke-width="2.600"/><rect x="4.500" y="6" width="8" height="5" fill="#fff" stroke="#333" stroke-width="1"/></svg>
<svg style="left:9px;top:924px" width="20" height="20"><circle cx="8.500" cy="8.500" r="6" fill="#f4f6f8" stroke="#555" stroke-width="1.800"/><path d="M13 13l5 5" stroke="#666" stroke-width="2.600"/><path d="M5.500 8.500h6M8.500 5.500v6" stroke="#1c9a3c" stroke-width="2"/></svg>
<svg style="left:9px;top:946px" width="20" height="20"><circle cx="8.500" cy="8.500" r="6" fill="#f4f6f8" stroke="#555" stroke-width="1.800"/><path d="M13 13l5 5" stroke="#666" stroke-width="2.600"/><path d="M5.500 8.500h6" stroke="#d01010" stroke-width="2.200"/></svg>
<svg style="left:9px;top:977px" width="20" height="20"><circle cx="8.500" cy="8.500" r="6" fill="#f4f6f8" stroke="#555" stroke-width="1.800"/><path d="M13 13l5 5" stroke="#666" stroke-width="2.600"/><circle cx="8.500" cy="8.500" r="5" fill="#1e63b5"/><path d="M8.500 4.500v8M4.500 8.500h8" stroke="#fff" stroke-width="1.400"/></svg>
<svg style="left:9px;top:1000px" width="20" height="20"><path d="M2 13c4-6 12-6 16 0c-4 5-12 5-16 0z" fill="#ddd" stroke="#444" stroke-width="1"/><circle cx="10" cy="12.500" r="3" fill="#333"/><path d="M5 2v8M1 6h8M2 3l6 6M8 3l-6 6" stroke="#f09a1c" stroke-width="1"/></svg>
<div class="a" style="left:322px;top:169px;width:4px;height:804px;background:#696969"></div><div class="a" style="left:33px;top:169px;width:289px;height:804px;background:#a2a2a2;border-radius:2px 4px 0 0"></div>
<div class="a" style="left:33px;top:190px;width:289px;height:782px;background:#f0f0f0;border-top:1px solid #fff;border-radius:3px 4px 0 0"></div>
<div class="a" style="left:318px;top:194px;width:4px;height:778px;background:#e6e6e6"></div>
<div class="a" style="left:36px;top:172px;width:1px;height:1px;background:#222"></div><div class="a" style="left:38px;top:172px;width:1px;height:1px;background:#222"></div>
<div class="a" style="left:36px;top:174px;width:1px;height:1px;background:#222"></div><div class="a" style="left:38px;top:174px;width:1px;height:1px;background:#222"></div>
<div class="a" style="left:36px;top:176px;width:1px;height:1px;background:#222"></div><div class="a" style="left:38px;top:176px;width:1px;height:1px;background:#222"></div>
<div class="a" style="left:36px;top:178px;width:1px;height:1px;background:#222"></div><div class="a" style="left:38px;top:178px;width:1px;height:1px;background:#222"></div>
<div class="a" style="left:36px;top:180px;width:1px;height:1px;background:#222"></div><div class="a" style="left:38px;top:180px;width:1px;height:1px;background:#222"></div>
<div class="a" style="left:36px;top:182px;width:1px;height:1px;background:#222"></div><div class="a" style="left:38px;top:182px;width:1px;height:1px;background:#222"></div>
<div class="a" style="left:36px;top:184px;width:1px;height:1px;background:#222"></div><div class="a" style="left:38px;top:184px;width:1px;height:1px;background:#222"></div>
<div class="a" style="left:36px;top:186px;width:1px;height:1px;background:#222"></div><div class="a" style="left:38px;top:186px;width:1px;height:1px;background:#222"></div>
<div class="t" style="left:45px;top:173px;font-size:15px;font-weight:bold;letter-spacing:-0.4px">Property</div>
<div class="a" style="left:49px;top:203px;width:186px;height:21px;background:linear-gradient(#f2f2f2,#e6e6e6);border:1px solid #b4b4b4"></div>
<div class="t" style="left:53px;top:208px;font-size:11px">No selection</div>
<svg style="left:220px;top:210px" width="10" height="8"><path d="M1 1.500l4 4l4-4" fill="none" stroke="#444" stroke-width="1.600"/></svg>
<div class="a" style="left:238px;top:201px;width:24px;height:24px;background:#eaeaea;border:1px solid #b4b4b4"></div>
<div class="a" style="left:264px;top:201px;width:24px;height:24px;background:#eaeaea;border:1px solid #b4b4b4"></div>
<div class="a" style="left:290px;top:201px;width:24px;height:24px;background:#eaeaea;border:1px solid #b4b4b4"></div>
<svg style="left:241px;top:204px" width="18" height="18"><rect x="1.500" y="1.500" width="15" height="15" fill="none" stroke="#1a1aa8" stroke-width="1.200" stroke-dasharray="1 1"/><rect x="4.500" y="4.500" width="9" height="9" fill="none" stroke="#1a1aa8" stroke-width="1" stroke-dasharray="1 1"/><path d="M6 9h6M9 6v6" stroke="#2a9a9a" stroke-width="1.600"/></svg>
<svg style="left:267px;top:204px" width="18" height="18"><rect x="3" y="2" width="8" height="10" fill="#fff"/><path d="M3 13.500h8V1" fill="none" stroke="#1a1aa8" stroke-width="1.200"/><path d="M7 3l4 4M11 3l-4 4" stroke="#e01010" stroke-width="1.200"/><path d="M10 6l5 7h-3l1 3h-2l-1-3z" fill="#fff" stroke="#1a1aa8" stroke-width="0.800"/></svg>
<svg style="left:293px;top:204px" width="18" height="18"><path d="M1.500 2.500h10l-4 5v6l-2.500 1v-7z" fill="#4a9ae8" stroke="#666" stroke-width="0.800"/><path d="M14 6l-5 7h3l-2 4l6-7h-3l2-4z" fill="#f6c21c" stroke="#a07800" stroke-width="0.400"/></svg>
<div class="a" style="left:49px;top:233px;width:266px;height:18px;background:linear-gradient(#bcbcbc,#a9a9a9 50%,#949494);border:1px solid #8c8c8c;border-bottom-color:#777"></div>
<div class="t" style="left:55px;top:236px;font-size:12px;font-weight:bold;letter-spacing:-0.5px">General</div>
<svg style="left:301px;top:239px" width="8" height="5"><path d="M0 5h8L4 0z" fill="#000"/></svg>
<div class="a" style="left:49px;top:251px;width:15px;height:126px;background:#f0f0f0"></div>
<div class="a" style="left:64px;top:251px;width:251px;height:127px;background:#fff;border:1px solid #a0a0a0;border-top:0"></div>
<div class="a" style="left:65px;top:251px;width:124px;height:126px;background:#f0f0f0"></div>
<div class="a" style="left:189px;top:251px;width:1px;height:126px;background:#a0a0a0"></div>
<div class="t" style="left:70px;top:254px;font-size:11px;letter-spacing:-0.200px">Color</div>
<div class="a" style="left:194px;top:254px;width:11px;height:11px;background:#ff7f00;border:1px solid #333"></div><div class="t" style="left:210px;top:255px;font-size:11px">ByLayer</div>
<div class="a" style="left:65px;top:268px;width:249px;height:1px;background:#a0a0a0"></div>
<div class="t" style="left:70px;top:272px;font-size:11px;letter-spacing:-0.200px">Layer</div>
<div class="t" style="left:195px;top:272px;font-size:11px;letter-spacing:-0.200px;width:119px;overflow:hidden;height:13px">REVISIONS</div>
<div class="a" style="left:65px;top:286px;width:249px;height:1px;background:#a0a0a0"></div>
<div class="t" style="left:70px;top:290px;font-size:11px;letter-spacing:-0.200px">Linetype</div>
<div class="a" style="left:195px;top:296px;width:31px;height:1px;background:#000"></div><div class="t" style="left:231px;top:291px;font-size:11px">ByLayer</div>
<div class="a" style="left:65px;top:304px;width:249px;height:1px;background:#a0a0a0"></div>
<div class="t" style="left:70px;top:308px;font-size:11px;letter-spacing:-0.200px">Linetype scale</div>
<div class="t" style="left:195px;top:308px;font-size:11px;letter-spacing:-0.200px;width:119px;overflow:hidden;height:13px">1</div>
<div class="a" style="left:65px;top:322px;width:249px;height:1px;background:#a0a0a0"></div>
<div class="t" style="left:70px;top:326px;font-size:11px;letter-spacing:-0.200px">Lineweight</div>
<div class="a" style="left:195px;top:332px;width:31px;height:1px;background:#000"></div><div class="t" style="left:231px;top:327px;font-size:11px">ByLayer</div>
<div class="a" style="left:65px;top:340px;width:249px;height:1px;background:#a0a0a0"></div>
<div class="t" style="left:70px;top:344px;font-size:11px;letter-spacing:-0.200px">Thickness</div>
<div class="t" style="left:195px;top:344px;font-size:11px;letter-spacing:-0.200px;width:119px;overflow:hidden;height:13px">0</div>
<div class="a" style="left:65px;top:358px;width:249px;height:1px;background:#a0a0a0"></div>
<div class="t" style="left:70px;top:362px;font-size:11px;letter-spacing:-0.200px">Transparency</div>
<div class="t" style="left:195px;top:362px;font-size:11px;letter-spacing:-0.200px;width:119px;overflow:hidden;height:13px">ByLayer</div>
<div class="a" style="left:49px;top:381px;width:266px;height:18px;background:linear-gradient(#bcbcbc,#a9a9a9 50%,#949494);border:1px solid #8c8c8c;border-bottom-color:#777"></div>
<div class="t" style="left:55px;top:384px;font-size:12px;font-weight:bold;letter-spacing:-0.5px">3D Visualisation</div>
<svg style="left:301px;top:387px" width="8" height="5"><path d="M0 5h8L4 0z" fill="#000"/></svg>
<div class="a" style="left:49px;top:399px;width:15px;height:36px;background:#f0f0f0"></div>
<div class="a" style="left:64px;top:399px;width:251px;height:37px;background:#fff;border:1px solid #a0a0a0;border-top:0"></div>
<div class="a" style="left:65px;top:399px;width:124px;height:36px;background:#f0f0f0"></div>
<div class="a" style="left:189px;top:399px;width:1px;height:36px;background:#a0a0a0"></div>
<div class="t" style="left:70px;top:402px;font-size:11px;letter-spacing:-0.200px">Material</div>
<div class="t" style="left:195px;top:402px;font-size:11px;letter-spacing:-0.200px;width:119px;overflow:hidden;height:13px">ByBlock</div>
<div class="a" style="left:65px;top:416px;width:249px;height:1px;background:#a0a0a0"></div>
<div class="a" style="left:190px;top:417px;width:124px;height:17px;background:#f0f0f0"></div>
<div class="t" style="left:70px;top:420px;font-size:11px;letter-spacing:-0.200px">Shadow display</div>
<div class="t" style="left:195px;top:420px;font-size:11px;letter-spacing:-0.200px;width:119px;overflow:hidden;height:13px">Shadows cast and rec...</div>
<div class="a" style="left:49px;top:439px;width:266px;height:18px;background:linear-gradient(#bcbcbc,#a9a9a9 50%,#949494);border:1px solid #8c8c8c;border-bottom-color:#777"></div>
<div class="t" style="left:55px;top:442px;font-size:12px;font-weight:bold;letter-spacing:-0.5px">Plot style</div>
<svg style="left:301px;top:445px" width="8" height="5"><path d="M0 5h8L4 0z" fill="#000"/></svg>
<div class="a" style="left:49px;top:457px;width:15px;height:72px;background:#f0f0f0"></div>
<div class="a" style="left:64px;top:457px;width:251px;height:73px;background:#fff;border:1px solid #a0a0a0;border-top:0"></div>
<div class="a" style="left:65px;top:457px;width:124px;height:72px;background:#f0f0f0"></div>
<div class="a" style="left:189px;top:457px;width:1px;height:72px;background:#a0a0a0"></div>
<div class="t" style="left:70px;top:460px;font-size:11px;letter-spacing:-0.200px">Plot style</div>
<div class="t" style="left:195px;top:460px;font-size:11px;letter-spacing:-0.200px;width:119px;overflow:hidden;height:13px">BYCOLOR</div>
<div class="a" style="left:65px;top:474px;width:249px;height:1px;background:#a0a0a0"></div>
<div class="a" style="left:190px;top:475px;width:124px;height:17px;background:#f0f0f0"></div>
<div class="t" style="left:70px;top:478px;font-size:11px;letter-spacing:-0.200px">Plot style table</div>
<div class="t" style="left:195px;top:478px;font-size:11px;letter-spacing:-0.200px;width:119px;overflow:hidden;height:13px">None</div>
<div class="a" style="left:65px;top:492px;width:249px;height:1px;background:#a0a0a0"></div>
<div class="a" style="left:190px;top:493px;width:124px;height:17px;background:#f0f0f0"></div>
<div class="t" style="left:70px;top:496px;font-size:11px;letter-spacing:-0.200px">Plot table attached to</div>
<div class="t" style="left:195px;top:496px;font-size:11px;letter-spacing:-0.200px;width:119px;overflow:hidden;height:13px">Model</div>
<div class="a" style="left:65px;top:510px;width:249px;height:1px;background:#a0a0a0"></div>
<div class="a" style="left:190px;top:511px;width:124px;height:17px;background:#f0f0f0"></div>
<div class="t" style="left:70px;top:514px;font-size:11px;letter-spacing:-0.200px">Plot table type</div>
<div class="t" style="left:195px;top:514px;font-size:11px;letter-spacing:-0.200px;width:119px;overflow:hidden;height:13px">Color-dependent plot st...</div>
<div class="a" style="left:49px;top:533px;width:266px;height:18px;background:linear-gradient(#bcbcbc,#a9a9a9 50%,#949494);border:1px solid #8c8c8c;border-bottom-color:#777"></div>
<div class="t" style="left:55px;top:536px;font-size:12px;font-weight:bold;letter-spacing:-0.5px">View</div>
<svg style="left:301px;top:539px" width="8" height="5"><path d="M0 5h8L4 0z" fill="#000"/></svg>
<div class="a" style="left:49px;top:551px;width:15px;height:90px;background:#f0f0f0"></div>
<div class="a" style="left:64px;top:551px;width:251px;height:91px;background:#fff;border:1px solid #a0a0a0;border-top:0"></div>
<div class="a" style="left:65px;top:551px;width:124px;height:90px;background:#f0f0f0"></div>
<div class="a" style="left:189px;top:551px;width:1px;height:90px;background:#a0a0a0"></div>
<div class="a" style="left:190px;top:551px;width:124px;height:17px;background:#f0f0f0"></div>
<div class="t" style="left:70px;top:554px;font-size:11px;letter-spacing:-0.200px">Center X</div>
<div class="t" style="left:195px;top:554px;font-size:11px;letter-spacing:-0.200px;width:119px;overflow:hidden;height:13px">6056.3353</div>
<div class="a" style="left:65px;top:568px;width:249px;height:1px;background:#a0a0a0"></div>
<div class="a" style="left:190px;top:569px;width:124px;height:17px;background:#f0f0f0"></div>
<div class="t" style="left:70px;top:572px;font-size:11px;letter-spacing:-0.200px">Center Y</div>
<div class="t" style="left:195px;top:572px;font-size:11px;letter-spacing:-0.200px;width:119px;overflow:hidden;height:13px">547.1583</div>
<div class="a" style="left:65px;top:586px;width:249px;height:1px;background:#a0a0a0"></div>
<div class="a" style="left:190px;top:587px;width:124px;height:17px;background:#f0f0f0"></div>
<div class="t" style="left:70px;top:590px;font-size:11px;letter-spacing:-0.200px">Center Z</div>
<div class="t" style="left:195px;top:590px;font-size:11px;letter-spacing:-0.200px;width:119px;overflow:hidden;height:13px">0</div>
<div class="a" style="left:65px;top:604px;width:249px;height:1px;background:#a0a0a0"></div>
<div class="a" style="left:190px;top:605px;width:124px;height:17px;background:#f0f0f0"></div>
<div class="t" style="left:70px;top:608px;font-size:11px;letter-spacing:-0.200px">Width</div>
<div class="t" style="left:195px;top:608px;font-size:11px;letter-spacing:-0.200px;width:119px;overflow:hidden;height:13px">1899.4402</div>
<div class="a" style="left:65px;top:622px;width:249px;height:1px;background:#a0a0a0"></div>
<div class="a" style="left:190px;top:623px;width:124px;height:17px;background:#f0f0f0"></div>
<div class="t" style="left:70px;top:626px;font-size:11px;letter-spacing:-0.200px">Height</div>
<div class="t" style="left:195px;top:626px;font-size:11px;letter-spacing:-0.200px;width:119px;overflow:hidden;height:13px">919.5995</div>
<div class="a" style="left:49px;top:645px;width:266px;height:18px;background:linear-gradient(#bcbcbc,#a9a9a9 50%,#949494);border:1px solid #8c8c8c;border-bottom-color:#777"></div>
<div class="t" style="left:55px;top:648px;font-size:12px;font-weight:bold;letter-spacing:-0.5px">Misc</div>
<svg style="left:301px;top:651px" width="8" height="5"><path d="M0 5h8L4 0z" fill="#000"/></svg>
<div class="a" style="left:49px;top:663px;width:15px;height:288px;background:#f0f0f0"></div>
<div class="a" style="left:64px;top:663px;width:251px;height:289px;background:#fff;border:1px solid #a0a0a0;border-top:0"></div>
<div class="a" style="left:65px;top:663px;width:124px;height:288px;background:#f0f0f0"></div>
<div class="a" style="left:189px;top:663px;width:1px;height:288px;background:#a0a0a0"></div>
<div class="t" style="left:70px;top:666px;font-size:11px;letter-spacing:-0.200px">Annotation scale</div>
<div class="t" style="left:195px;top:666px;font-size:11px;letter-spacing:-0.200px;width:119px;overflow:hidden;height:13px">1:1</div>
<div class="a" style="left:65px;top:680px;width:249px;height:1px;background:#a0a0a0"></div>
<div class="t" style="left:70px;top:684px;font-size:11px;letter-spacing:-0.200px">UCS icon On</div>
<div class="t" style="left:195px;top:684px;font-size:11px;letter-spacing:-0.200px;width:119px;overflow:hidden;height:13px">Yes</div>
<div class="a" style="left:65px;top:698px;width:249px;height:1px;background:#a0a0a0"></div>
<div class="t" style="left:70px;top:702px;font-size:11px;letter-spacing:-0.200px">UCS icon at origin</div>
<div class="t" style="left:195px;top:702px;font-size:11px;letter-spacing:-0.200px;width:119px;overflow:hidden;height:13px">Yes</div>
<div class="a" style="left:65px;top:716px;width:249px;height:1px;background:#a0a0a0"></div>
<div class="t" style="left:70px;top:720px;font-size:11px;letter-spacing:-0.200px">UCS per viewport</div>
<div class="t" style="left:195px;top:720px;font-size:11px;letter-spacing:-0.200px;width:119px;overflow:hidden;height:13px">Yes</div>
<div class="a" style="left:65px;top:734px;width:249px;height:1px;background:#a0a0a0"></div>
<div class="a" style="left:190px;top:735px;width:124px;height:17px;background:#f0f0f0"></div>
<div class="t" style="left:70px;top:738px;font-size:11px;letter-spacing:-0.200px">UCS Name</div>
<div class="t" style="left:195px;top:738px;font-size:11px;letter-spacing:-0.200px;width:119px;overflow:hidden;height:13px">* WORLD *</div>
<div class="a" style="left:65px;top:752px;width:249px;height:1px;background:#a0a0a0"></div>
<div class="t" style="left:70px;top:756px;font-size:11px;letter-spacing:-0.200px">Visual style</div>
<div class="t" style="left:195px;top:756px;font-size:11px;letter-spacing:-0.200px;width:119px;overflow:hidden;height:13px">2D Wireframe</div>
<div class="a" style="left:65px;top:770px;width:249px;height:1px;background:#a0a0a0"></div>
<div class="t" style="left:70px;top:774px;font-size:11px;letter-spacing:-0.200px">Set PICKADD</div>
<div class="t" style="left:195px;top:774px;font-size:11px;letter-spacing:-0.200px;width:119px;overflow:hidden;height:13px">Yes</div>
<div class="a" style="left:65px;top:788px;width:249px;height:1px;background:#a0a0a0"></div>
<div class="t" style="left:70px;top:792px;font-size:11px;letter-spacing:-0.200px">Set PICKAUTO</div>
<div class="t" style="left:195px;top:792px;font-size:11px;letter-spacing:-0.200px;width:119px;overflow:hidden;height:13px">Yes</div>
<div class="a" style="left:65px;top:806px;width:249px;height:1px;background:#a0a0a0"></div>
<div class="t" style="left:70px;top:810px;font-size:11px;letter-spacing:-0.200px">Set PICKBOX</div>
<div class="t" style="left:195px;top:810px;font-size:11px;letter-spacing:-0.200px;width:119px;overflow:hidden;height:13px">3</div>
<div class="a" style="left:65px;top:824px;width:249px;height:1px;background:#a0a0a0"></div>
<div class="t" style="left:70px;top:828px;font-size:11px;letter-spacing:-0.200px">Set PICKDRAG</div>
<div class="t" style="left:195px;top:828px;font-size:11px;letter-spacing:-0.200px;width:119px;overflow:hidden;height:13px">No</div>
<div class="a" style="left:65px;top:842px;width:249px;height:1px;background:#a0a0a0"></div>
<div class="t" style="left:70px;top:846px;font-size:11px;letter-spacing:-0.200px">Set PICKFIRST</div>
<div class="t" style="left:195px;top:846px;font-size:11px;letter-spacing:-0.200px;width:119px;overflow:hidden;height:13px">Yes</div>
<div class="a" style="left:65px;top:860px;width:249px;height:1px;background:#a0a0a0"></div>
<div class="t" style="left:70px;top:864px;font-size:11px;letter-spacing:-0.200px">Global linetype scale</div>
<div class="t" style="left:195px;top:864px;font-size:11px;letter-spacing:-0.200px;width:119px;overflow:hidden;height:13px">1</div>
<div class="a" style="left:65px;top:878px;width:249px;height:1px;background:#a0a0a0"></div>
<div class="t" style="left:70px;top:882px;font-size:11px;letter-spacing:-0.200px">Cursor size</div>
<div class="t" style="left:195px;top:882px;font-size:11px;letter-spacing:-0.200px;width:119px;overflow:hidden;height:13px">5</div>
<div class="a" style="left:65px;top:896px;width:249px;height:1px;background:#a0a0a0"></div>
<div class="t" style="left:70px;top:900px;font-size:11px;letter-spacing:-0.200px">Fill area</div>
<div class="t" style="left:195px;top:900px;font-size:11px;letter-spacing:-0.200px;width:119px;overflow:hidden;height:13px">Yes</div>
<div class="a" style="left:65px;top:914px;width:249px;height:1px;background:#a0a0a0"></div>
<div class="t" style="left:70px;top:918px;font-size:11px;letter-spacing:-0.200px">Number of decimal pla...</div>
<div class="t" style="left:195px;top:918px;font-size:11px;letter-spacing:-0.200px;width:119px;overflow:hidden;height:13px">4</div>
<div class="a" style="left:65px;top:932px;width:249px;height:1px;background:#a0a0a0"></div>
<div class="t" style="left:70px;top:936px;font-size:11px;letter-spacing:-0.200px">Mirror text</div>
<div class="t" style="left:195px;top:936px;font-size:11px;letter-spacing:-0.200px;width:119px;overflow:hidden;height:13px">Yes</div>
<div class="a" style="left:326px;top:955px;width:1561px;height:18px;background:#f0f0f0"></div>
<div class="a" style="left:327px;top:956px;width:15px;height:16px;background:#f0f0f0;border:1px solid #aaa;border-left-color:#fff;border-top-color:#fff"></div>
<div class="a" style="left:342px;top:956px;width:15px;height:16px;background:#f0f0f0;border:1px solid #aaa;border-left-color:#fff;border-top-color:#fff"></div>
<div class="a" style="left:357px;top:956px;width:15px;height:16px;background:#f0f0f0;border:1px solid #aaa;border-left-color:#fff;border-top-color:#fff"></div>
<div class="a" style="left:372px;top:956px;width:15px;height:16px;background:#f0f0f0;border:1px solid #aaa;border-left-color:#fff;border-top-color:#fff"></div>
<svg style="left:327px;top:956px" width="62" height="16"><path d="M4 4v8" stroke="#000" stroke-width="1.300"/><path d="M11 4v8l-5-4z" fill="#000"/><path d="M25 4v8l-5-4z" fill="#000"/><path d="M35 4v8l5-4z" fill="#000"/><path d="M50 4v8l5-4z" fill="#000"/><path d="M57 4v8" stroke="#000" stroke-width="1.300"/></svg>
<svg style="left:388px;top:955px" width="180" height="18"><path d="M4.500 1L11.500 16.500H52.500L59.500 1" fill="#fff" stroke="#000" stroke-width="1"/><path d="M53.500 5L59.500 16.500H108.500L115.500 1M110.500 5L116.500 16.500H167.500L174.500 1" fill="none" stroke="#000" stroke-width="1"/><path d="M4 0.500H60" stroke="#fff" stroke-width="1.500"/></svg>
<div class="t" style="left:402px;top:958px;font-size:12px;font-weight:bold;letter-spacing:-0.4px">Model</div>
<div class="t" style="left:452px;top:958px;font-size:12px;letter-spacing:-0.3px">Layout1</div>
<div class="t" style="left:511px;top:958px;font-size:12px;letter-spacing:-0.3px">Layout2</div>
<div class="a" style="left:1888px;top:169px;width:28px;height:667px;border-radius:3px;background:linear-gradient(90deg,#8e98a6 0%,#a9b1bd 35%,#b4bac4 55%,#8f97a3 100%)"></div>
<div class="a" style="left:1894px;top:173px;width:2px;height:2px;background:#fff"></div><div class="a" style="left:1893px;top:172px;width:2px;height:2px;background:#222"></div>
<div class="a" style="left:1898px;top:173px;width:2px;height:2px;background:#fff"></div><div class="a" style="left:1897px;top:172px;width:2px;height:2px;background:#222"></div>
<div class="a" style="left:1902px;top:173px;width:2px;height:2px;background:#fff"></div><div class="a" style="left:1901px;top:172px;width:2px;height:2px;background:#222"></div>
<div class="a" style="left:1906px;top:173px;width:2px;height:2px;background:#fff"></div><div class="a" style="left:1905px;top:172px;width:2px;height:2px;background:#222"></div>
<div class="a" style="left:1893px;top:269px;width:18px;height:1px;background:#e8eaee"></div>
<div class="a" style="left:1893px;top:321px;width:18px;height:1px;background:#e8eaee"></div>
<div class="a" style="left:1893px;top:374px;width:18px;height:1px;background:#e8eaee"></div>
<div class="a" style="left:1893px;top:425px;width:18px;height:1px;background:#e8eaee"></div>
<div class="a" style="left:1893px;top:500px;width:18px;height:1px;background:#e8eaee"></div>
<div class="a" style="left:1893px;top:530px;width:18px;height:1px;background:#e8eaee"></div>
<div class="a" style="left:1893px;top:560px;width:18px;height:1px;background:#e8eaee"></div>
<div class="a" style="left:1893px;top:590px;width:18px;height:1px;background:#e8eaee"></div>
<div class="a" style="left:1893px;top:619px;width:18px;height:1px;background:#e8eaee"></div>
<div class="a" style="left:1893px;top:649px;width:18px;height:1px;background:#e8eaee"></div>
<div class="a" style="left:1893px;top:724px;width:18px;height:1px;background:#e8eaee"></div>
<div class="a" style="left:1893px;top:753px;width:18px;height:1px;background:#e8eaee"></div>
<svg style="left:1892px;top:179px" width="20" height="20"><rect x="2.500" y="3.500" width="5" height="4" fill="#eee" stroke="#bbb" stroke-width="0.800"/><rect x="9.500" y="11.500" width="6" height="5" fill="#fff" stroke="#1f2d4a" stroke-width="1.200"/><path d="M9.500 5h3v3" fill="none" stroke="#d22"/><path d="M11 8l1.500 2l1.500-2z" fill="#d22"/></svg>
<svg style="left:1892px;top:200px" width="20" height="20"><rect x="2.500" y="3.500" width="5" height="4" fill="#fff" stroke="#1f2d4a" stroke-width="1.200"/><rect x="7.500" y="9.500" width="5" height="4" fill="#fff" stroke="#1f2d4a" stroke-width="1.200"/><rect x="11.500" y="13.500" width="5" height="4" fill="#fff" stroke="#1f2d4a" stroke-width="1.200"/><path d="M10 4.500h3v2" fill="none" stroke="#d22"/><path d="M11.500 6.500l1.500 2l1.500-2z" fill="#d22"/></svg>
<svg style="left:1892px;top:222px" width="20" height="20"><path d="M3.500 16.500v-6h5v-4a3.500 3.500 0 0 1 7 0v6h-5v4z" fill="#c6ccd6" stroke="#1f2d4a" stroke-width="1.200"/></svg>
<svg style="left:1892px;top:245px" width="20" height="20"><rect x="3.500" y="2.500" width="12" height="12" fill="none" stroke="#aaa" stroke-width="0.800" stroke-dasharray="2 1.500"/><rect x="4.500" y="9.500" width="6" height="6" fill="#fff" stroke="#1f2d4a" stroke-width="1.200"/></svg>
<svg style="left:1892px;top:274px" width="20" height="20"><path d="M4.500 5A6.500 6.500 0 1 0 15.500 5" fill="none" stroke="#1e63b5" stroke-width="2"/><path d="M13 5.500l4.500-3.500l0 5z" fill="#1e63b5"/><path d="M8 9.500h4M10 7.500v4" stroke="#d22" stroke-width="1"/></svg>
<svg style="left:1892px;top:296px" width="20" height="20"><path d="M4.500 8A6.500 5 0 1 0 15.500 8" fill="none" stroke="#1e63b5" stroke-width="2"/><path d="M2 5l1.500 5l3.500-3z" fill="#1e63b5"/><path d="M10 2v14" stroke="#d22" stroke-width="1" stroke-dasharray="3 1.500"/></svg>
<svg style="left:1892px;top:327px" width="20" height="20"><path d="M8 4.500V16H3Z" fill="#e8e8e8" stroke="#1f2d4a" stroke-width="1.200"/><path d="M12 4.500V16H17Z" fill="#e8e8e8" stroke="#1f2d4a" stroke-width="1.200"/><path d="M10 1v18" stroke="#e22" stroke-width="1" stroke-dasharray="5 1 1 1"/></svg>
<svg style="left:1892px;top:349px" width="20" height="20"><path d="M8 5L3 15l5 1z" fill="#f4f4f4" stroke="#2a8a4a" stroke-width="1.300"/><path d="M12 5l5 10l-5 1z" fill="#f4f4f4" stroke="#2a8a4a" stroke-width="1.300"/><path d="M6 8l8 8" stroke="#d22" stroke-width="1.300"/></svg>
<svg style="left:1892px;top:379px" width="20" height="20"><rect x="4.500" y="4.500" width="11" height="10" fill="none" stroke="#555" stroke-width="0.700" stroke-dasharray="2 2"/><rect x="3" y="3" width="3" height="3" fill="#1f63c6"/><rect x="14" y="3" width="3" height="3" fill="#1f63c6"/><rect x="3" y="13" width="3" height="3" fill="#1f63c6"/><rect x="14" y="13" width="3" height="3" fill="#1f63c6"/></svg>
<svg style="left:1892px;top:400px" width="20" height="20"><g fill="#1f63c6"><rect x="3" y="3" width="3" height="3"/><rect x="8.500" y="3" width="3" height="3"/><rect x="14" y="3" width="3" height="3"/><rect x="3" y="8.500" width="3" height="3"/><rect x="14" y="8.500" width="3" height="3"/><rect x="3" y="14" width="3" height="3"/><rect x="8.500" y="14" width="3" height="3"/><rect x="14" y="14" width="3" height="3"/></g><rect x="8.500" y="8.500" width="3" height="3" fill="#888"/></svg>
<svg style="left:1892px;top:431px" width="20" height="20"><rect x="4" y="6" width="12" height="10" fill="none" stroke="#1c8a3c" stroke-width="2"/><path d="M8 4h5l1.500 3" fill="none" stroke="#888" stroke-width="1"/></svg>
<svg style="left:1892px;top:452px" width="20" height="20"><path d="M4 6v10h12V6" fill="none" stroke="#1c8a3c" stroke-width="2"/><path d="M4 6h3M13 6h3" stroke="#1c8a3c" stroke-width="2"/></svg>
<svg style="left:1892px;top:475px" width="20" height="20"><rect x="4" y="7" width="7" height="7" fill="none" stroke="#1c8a3c" stroke-width="2"/><path d="M13.500 2v16" stroke="#333" stroke-width="1.200"/></svg>
<svg style="left:1892px;top:505px" width="20" height="20"><path d="M4 8l3-4h9v9l-3 4H4zM4 8h9l3-4M13 8v9" fill="#c8ccd2" stroke="#777" stroke-width="1"/></svg>
<svg style="left:1892px;top:535px" width="20" height="20"><rect x="3.500" y="10.500" width="3" height="6" fill="#fff" stroke="#1f2d4a" stroke-width="1.200"/><rect x="11.500" y="3.500" width="4" height="13" fill="#fff" stroke="#1f2d4a" stroke-width="1.200"/></svg>
<svg style="left:1892px;top:565px" width="20" height="20"><path d="M3 16l5-5M11 3l6 6" stroke="#1f2d4a" stroke-width="1.800"/><path d="M9 9l2-2" stroke="#2a62b8" stroke-width="1" stroke-dasharray="1 1"/></svg>
<svg style="left:1892px;top:593px" width="20" height="20"><path d="M3 3v5M7 3v5M11 3v5M15 3v5M3 5.500h12" stroke="#333" stroke-width="1" stroke-dasharray="1.500 1"/><path d="M2 11h16" stroke="#223" stroke-width="1.200"/><rect x="2" y="13" width="16" height="4" fill="#f4b030"/></svg>
<svg style="left:1892px;top:625px" width="20" height="20"><path d="M3 16.500V11C3 6 7 3.500 12 3.500H17V16.500Z" fill="#eef2f8" stroke="#1f2d4a" stroke-width="1.300"/></svg>
<svg style="left:1892px;top:656px" width="20" height="20"><path d="M5 14C1 13 2 7 6 7h9" fill="none" stroke="#1f2d4a" stroke-width="1.200"/><circle cx="5" cy="14" r="1.500" fill="#fff" stroke="#2a62b8" stroke-width="1"/><circle cx="15" cy="14" r="1.500" fill="#fff" stroke="#2a62b8" stroke-width="1"/><path d="M8 13l8-8l2 2l-8 8z" fill="#f0a030"/></svg>
<svg style="left:1892px;top:677px" width="20" height="20"><path d="M3 16C4 8 9 14 11 9S15 3 17 5" fill="none" stroke="#1f2d4a" stroke-width="1.800"/><circle cx="3" cy="16" r="1.500" fill="#fff" stroke="#2a62b8" stroke-width="1"/><path d="M8 14l8-8l2 2l-8 8z" fill="#f0a030"/></svg>
<svg style="left:1892px;top:699px" width="20" height="20"><text x="3" y="16" font-family="Liberation Sans" font-weight="bold" font-style="italic" font-size="16" fill="#2a5fa8">A</text><path d="M9 15l8-8l2 2l-8 8z" fill="#f0a030"/></svg>
<svg style="left:1892px;top:729px" width="20" height="20"><path d="M7 7.500l3-2.500l7.500 9l-3 2.500z" fill="#d22" stroke="#911" stroke-width="0.600"/><path d="M3 6l3-3l1 2l3-1l-2 3l-2 1z" fill="#f6d21c"/></svg>
<svg style="left:1892px;top:757px" width="20" height="20"><rect x="4.500" y="8.500" width="8" height="8" fill="none" stroke="#9ab" stroke-width="1"/><rect x="9.500" y="3.500" width="8" height="8" fill="none" stroke="#1c8a3c" stroke-width="1.200"/></svg>
<svg style="left:1892px;top:780px" width="20" height="20"><rect x="8" y="3" width="9" height="6" fill="#555"/><rect x="3.500" y="8.500" width="8" height="9" fill="#e8f0fa" stroke="#2a62b8"/><path d="M6 3l4 4M10 3l-4 4" stroke="#d22" stroke-width="1.200"/><path d="M5 12h5M5 14.500h5" stroke="#2a62b8" stroke-width="0.800"/></svg>
<svg style="left:1892px;top:802px" width="20" height="20"><rect x="3.500" y="3.500" width="13" height="14" fill="#fff" stroke="#2a62b8" stroke-width="1.200"/><rect x="3.500" y="3.500" width="13" height="3" fill="#2a62b8"/><path d="M6 10h2M6 14h2M10 10h4M10 14h4" stroke="#555" stroke-width="1"/></svg>
<div class="a" style="left:33px;top:977px;width:1854px;height:75px;background:#a0a0a0;border-top:1px solid #e0e0e0"></div>
<div class="a" style="left:54px;top:978px;width:1832px;height:52px;background:#fff;border-bottom:1px solid #555;border-left:1px solid #777"></div>
<div class="a" style="left:54px;top:1031px;width:1832px;height:20px;background:#fff;border-left:1px solid #777"></div>
<div class="a" style="left:1868px;top:979px;width:17px;height:50px;background:#f0f0f0"></div>
<div class="a" style="left:1870px;top:996px;width:13px;height:16px;background:#cdcdcd"></div>
<svg style="left:1870px;top:982px" width="13" height="46"><path d="M2.500 8l4-4l4 4M2.500 38l4 4l4-4" fill="none" stroke="#444" stroke-width="1.600"/></svg>
<svg style="left:37px;top:981px" width="14" height="40"><path d="M2 3l7 7M9 3l-7 7" stroke="#444" stroke-width="1.200"/><path d="M4 22h4v6h-4zM3 28h6M6 28v5" fill="none" stroke="#555" stroke-width="1"/></svg>
<div class="t" style="left:55px;top:979px;font-family:'Liberation Mono',monospace;font-size:13.400px;line-height:14px;white-space:pre">Command: _OPEN
File Version: R18 (2004) release
Command:</div>
<div class="t" style="left:59px;top:1034px;font-family:'Liberation Mono',monospace;font-size:11.600px;font-weight:bold">Command: _OPEN</div>
<div class="a" style="left:4px;top:1052px;width:1912px;height:22px;background:linear-gradient(#3b444f 0%,#373e47 30%,#333 34%,#383838 100%)"></div>
<div class="a" style="left:0;top:1074px;width:1920px;height:6px;background:#ececec"></div>
<div class="a" style="left:227px;top:1078px;width:42px;height:2px;background:#cfcfcf"></div><div class="a" style="left:1859px;top:1078px;width:42px;height:2px;background:#cfcfcf"></div>
<div class="a" style="left:1342px;top:1054px;width:1px;height:18px;background:#1e1e1e"></div><div class="a" style="left:1343px;top:1054px;width:1px;height:18px;background:#5a5a5a"></div>
<div class="a" style="left:1350px;top:1054px;width:1px;height:18px;background:#1e1e1e"></div><div class="a" style="left:1351px;top:1054px;width:1px;height:18px;background:#5a5a5a"></div>
<div class="a" style="left:1477px;top:1054px;width:1px;height:18px;background:#1e1e1e"></div><div class="a" style="left:1478px;top:1054px;width:1px;height:18px;background:#5a5a5a"></div>
<div class="a" style="left:1527px;top:1054px;width:1px;height:18px;background:#1e1e1e"></div><div class="a" style="left:1528px;top:1054px;width:1px;height:18px;background:#5a5a5a"></div>
<div class="a" style="left:1569px;top:1054px;width:1px;height:18px;background:#1e1e1e"></div><div class="a" style="left:1570px;top:1054px;width:1px;height:18px;background:#5a5a5a"></div>
<div class="a" style="left:1591px;top:1054px;width:1px;height:18px;background:#1e1e1e"></div><div class="a" style="left:1592px;top:1054px;width:1px;height:18px;background:#5a5a5a"></div>
<div class="a" style="left:1613px;top:1054px;width:1px;height:18px;background:#1e1e1e"></div><div class="a" style="left:1614px;top:1054px;width:1px;height:18px;background:#5a5a5a"></div>
<div class="a" style="left:1635px;top:1054px;width:1px;height:18px;background:#1e1e1e"></div><div class="a" style="left:1636px;top:1054px;width:1px;height:18px;background:#5a5a5a"></div>
<div class="a" style="left:1657px;top:1054px;width:1px;height:18px;background:#1e1e1e"></div><div class="a" style="left:1658px;top:1054px;width:1px;height:18px;background:#5a5a5a"></div>
<div class="a" style="left:1679px;top:1054px;width:1px;height:18px;background:#1e1e1e"></div><div class="a" style="left:1680px;top:1054px;width:1px;height:18px;background:#5a5a5a"></div>
<div class="a" style="left:1701px;top:1054px;width:1px;height:18px;background:#1e1e1e"></div><div class="a" style="left:1702px;top:1054px;width:1px;height:18px;background:#5a5a5a"></div>
<div class="a" style="left:1723px;top:1054px;width:1px;height:18px;background:#1e1e1e"></div><div class="a" style="left:1724px;top:1054px;width:1px;height:18px;background:#5a5a5a"></div>
<div class="a" style="left:1745px;top:1054px;width:1px;height:18px;background:#1e1e1e"></div><div class="a" style="left:1746px;top:1054px;width:1px;height:18px;background:#5a5a5a"></div>
<div class="a" style="left:1767px;top:1054px;width:1px;height:18px;background:#1e1e1e"></div><div class="a" style="left:1768px;top:1054px;width:1px;height:18px;background:#5a5a5a"></div>
<div class="a" style="left:1809px;top:1054px;width:1px;height:18px;background:#1e1e1e"></div><div class="a" style="left:1810px;top:1054px;width:1px;height:18px;background:#5a5a5a"></div>
<div class="a" style="left:1851px;top:1054px;width:1px;height:18px;background:#1e1e1e"></div><div class="a" style="left:1852px;top:1054px;width:1px;height:18px;background:#5a5a5a"></div>
<div class="a" style="left:1873px;top:1054px;width:1px;height:18px;background:#1e1e1e"></div><div class="a" style="left:1874px;top:1054px;width:1px;height:18px;background:#5a5a5a"></div>
<div class="a" style="left:1895px;top:1054px;width:1px;height:18px;background:#1e1e1e"></div><div class="a" style="left:1896px;top:1054px;width:1px;height:18px;background:#5a5a5a"></div>
<div class="t" style="left:1356px;top:1058px;font-size:11.5px;color:#fff;letter-spacing:-0.35px">5147.8364,1004.621,0</div>
<div class="t" style="left:1482px;top:1058px;font-size:11.5px;color:#fff;letter-spacing:-0.35px">OpenGL</div>
<div class="t" style="left:1551px;top:1058px;font-size:11.5px;color:#fff;letter-spacing:-0.35px">1:1</div>
<div class="t" style="left:1769px;top:1058px;font-size:11.5px;color:#fff;letter-spacing:-0.35px">MODEL</div>
<div class="t" style="left:1813px;top:1058px;font-size:11.5px;color:#8a8a8a;letter-spacing:-0.35px">TABLET</div>
<svg style="left:1530px;top:1053px" width="390" height="20" viewBox="1530 1053 390 20"><path d="M1538 1057.500a1.600 1.600 0 1 1 0.100 0zM1538 1059.500l1.200 4l4 4.500l-1.500 1.200l-3.700-3.700l-3.700 3.700l-1.500-1.200l4-4.500z" fill="#fff"/><rect x="1571" y="1054" width="17" height="18" fill="#5e5e5e"/><path d="M1577 1058.500a1.400 1.400 0 1 1 0.100 0zM1577 1060l1 3.500l3 4.500l-1.300 1l-2.700-3.500l-2.700 3.500l-1.300-1l3-4.500z" fill="#e8e8e8"/><circle cx="1582.500" cy="1062" r="4.200" fill="#f8e88a" stroke="#d8b82c" stroke-width="0.800"/><path d="M1581 1066.500h3v2h-3z" fill="#ccc"/><path d="M1600 1058.500a1.400 1.400 0 1 1 0.100 0zM1600 1060l1 3.500l3 4.500l-1.300 1l-2.700-3.500l-2.700 3.500l-1.300-1l3-4.500z" fill="#fff"/><path d="M1607.500 1054.500l-4 5.500h2.500l-2 4.500l5.500-6.500h-2.500l2-3.500z" fill="#f6921c"/><g stroke="#d8d8d8" stroke-width="1" shape-rendering="crispEdges"><path d="M1615 1055.500h17M1615 1059.500h17M1615 1063.500h17M1615 1067.500h17M1615 1071.500h17M1615.500 1055v17M1619.500 1055v17M1623.500 1055v17M1627.500 1055v17M1631.500 1055v17"/></g><path d="M1616 1065.500h11" stroke="#e01010" stroke-width="1.300"/><path d="M1621.500 1060v11" stroke="#1cb03c" stroke-width="1.300"/><rect x="1619.500" y="1063.500" width="4" height="4" fill="none" stroke="#e01010" stroke-width="1"/><g stroke="#9c9c9c" stroke-width="1" shape-rendering="crispEdges"><path d="M1637 1055.500h17M1637 1059.500h17M1637 1063.500h17M1637 1067.500h17M1637 1071.500h17M1637.500 1055v17M1641.500 1055v17M1645.500 1055v17M1649.500 1055v17M1653.500 1055v17"/></g><path d="M1661.500 1055v14" stroke="#1cb03c" stroke-width="1.400"/><path d="M1661 1069.500h14" stroke="#e01010" stroke-width="1.400"/><path d="M1662 1062.500h6v7" fill="none" stroke="#fff" stroke-width="1.300"/><circle cx="1688.500" cy="1063.500" r="7.300" fill="none" stroke="#9a9a9a" stroke-width="1.600"/><path d="M1696 1057l-7 6.500h8" fill="none" stroke="#e01010" stroke-width="1.300"/><path d="M1703 1063.500h16M1711 1055v17" stroke="#fff" stroke-width="1.200"/><rect x="1708.500" y="1061" width="4" height="4" fill="#fff" stroke="#e01010" stroke-width="1.200"/><rect x="1725" y="1054" width="16" height="18" fill="#6e6e6e"/><path d="M1726 1070.500h14M1727 1070L1740 1056" stroke="#fff" stroke-width="1.300" fill="none"/><path d="M1748 1063.500h15M1755.500 1056v15" stroke="#fff" stroke-width="2"/><g transform="translate(1862.500,1063.500)"><g fill="#2a8af0"><rect x="-2" y="-9" width="4" height="18"/><rect x="-2" y="-9" width="4" height="18" transform="rotate(45)"/><rect x="-2" y="-9" width="4" height="18" transform="rotate(90)"/><rect x="-2" y="-9" width="4" height="18" transform="rotate(135)"/><circle r="6.500"/></g><circle r="2.800" fill="#333"/></g><rect x="1877" y="1057" width="10" height="7" fill="#e8f0fa" stroke="#2a6ad0" stroke-width="0.800"/><rect x="1877" y="1057" width="10" height="2" fill="#2a6ad0"/><rect x="1881.500" y="1062.500" width="10" height="8" fill="#fff" stroke="#2a6ad0" stroke-width="1"/><rect x="1881.500" y="1062.500" width="10" height="2.500" fill="#2a6ad0"/><circle cx="1906" cy="1063.500" r="8" fill="#34b048" stroke="#cfd8cf" stroke-width="1"/><path d="M1901.500 1063.500l3.500 3.800l6-8" fill="none" stroke="#fff" stroke-width="2.600"/></svg>
<svg style="left:326px;top:169px;overflow:hidden;background:#000" width="1561" height="786" viewBox="326 169 1561 786" fill="none" stroke="#fff" stroke-width="1" shape-rendering="crispEdges">
<path d="M330.5 169V955M373.5 169V955M458.5 169V955M501.5 169V955M544.5 169V955M587.5 169V955M672.5 169V955M715.5 169V955M758.5 169V955M801.5 169V955M886.5 169V955M929.5 169V955M972.5 169V955M1015.5 169V955M1100.5 169V955M1143.5 169V955M1186.5 169V955M1229.5 169V955M1314.5 169V955M1357.5 169V955M1400.5 169V955M1443.5 169V955M1528.5 169V955M1571.5 169V955M1614.5 169V955M1657.5 169V955M1742.5 169V955M1785.5 169V955M1828.5 169V955M1871.5 169V955M326 217.5H1887M326 260.5H1887M326 303.5H1887M326 346.5H1887M326 431.5H1887M326 474.5H1887M326 517.5H1887M326 560.5H1887M326 645.5H1887M326 688.5H1887M326 731.5H1887M326 774.5H1887M326 859.5H1887M326 902.5H1887M326 945.5H1887" stroke="#171717" shape-rendering="crispEdges"/>
<path d="M416.5 169V955M630.5 169V955M844.5 169V955M1058.5 169V955M1272.5 169V955M1486.5 169V955M1700.5 169V955M326 174.5H1887M326 388.5H1887M326 602.5H1887M326 816.5H1887" stroke="#2e2e2e" shape-rendering="crispEdges"/>
<path d="M326 211.5H952M326 240.5H952M326 324.5H897M326 353.5H891.5"/>
<path d="M326 214.5H952M326 236.5H952M326 327.5H894M326 349.5H891.5" stroke="#848484"/>
<path d="M346.5 252.5H581.5V311.5H346.5Z"/>
<text x="569" y="278" text-anchor="end" font-family="Liberation Sans,sans-serif" font-weight="bold" font-style="italic" font-size="30" fill="#fff" stroke="#fff" stroke-width="2.600" stroke-linejoin="round" textLength="149" lengthAdjust="spacing">Flexcrane</text>
<text x="569" y="278" text-anchor="end" font-family="Liberation Sans,sans-serif" font-weight="bold" font-style="italic" font-size="30" fill="#000" stroke="#000" stroke-width="0.700" stroke-linejoin="round" textLength="149" lengthAdjust="spacing">Flexcrane</text>
<text x="569" y="305" text-anchor="end" font-family="Liberation Sans,sans-serif" font-size="29.5" fill="#fff" stroke="#fff" stroke-width="2.600" stroke-linejoin="round" textLength="78" lengthAdjust="spacingAndGlyphs">1000kg</text>
<text x="569" y="305" text-anchor="end" font-family="Liberation Sans,sans-serif" font-size="29.5" fill="#000" stroke="#000" stroke-width="0.700" stroke-linejoin="round" textLength="78" lengthAdjust="spacingAndGlyphs">1000kg</text>
<path d="M326 170.5H382" stroke="#f00"/>
<path d="M329.5 170V223" stroke="#0f0"/>
<path d="M326.5 167H333V174H326.5Z" stroke="#f00"/>
<path d="M746.5 169V195M756.5 169V195M746.5 189.5H756.5M743 195H760M741.5 197H747.5Q749 197 749 198.5V205.5Q749 207 747.5 207H741.5Q740 207 740 205.5V198.5Q740 197 741.5 197ZM751.5 197H757.5Q759 197 759 198.5V205.5Q759 207 757.5 207H751.5Q750 207 750 205.5V198.5Q750 197 751.5 197ZM737 208.5q0-8 5-11M761 197V208"/>
<path d="M725.5 208.5H777V216L771 222.500H733.500L725.500 216Z"/>
<path d="M762.5 187.5H839.5V211H762.5Z"/>
<path d="M824.500 187.500q3-2.500 6 0" stroke="#848484"/>
<path d="M839.5 189.5H928M839.5 191.5H925M839.5 194.5H925M839.5 198H894M839.5 199.5H894M839.5 209.5H891" stroke="#848484"/>
<path d="M891.5 205H929.5V211H891.5ZM894 198.5H926V205H894ZM928.5 189.5H934.5V200H928.5ZM900 205V211M921 205V211"/>
<path d="M934.500 198.500L945.500 201.500V211M948.500 203V211"/>
<path d="M896.2 225.3a5 5 0 1 0 10 0a5 5 0 1 0 -10 0M896.5 223.5H906M896.5 226.5H906M898 229H904.5M899 220.500q2-1.500 4.500 0"/>
<path d="M896.2 339a5 5 0 1 0 10 0a5 5 0 1 0 -10 0M896.2 339H906.2"/>
<path d="M918 278H926.5V287H918Z" stroke-dasharray="3 2"/>
<path d="M891.500 359V331.200L936.600 286.100H941M891.500 359H954.700L957.600 352.600M912.900 359V353.200H931.300V359"/>
<path d="M944.5 269H948Q952 269 952 273V300Q952 304 948 304H944.5Q940.5 304 940.5 300V273Q940.5 269 944.5 269ZM944 271V302M947.500 270V303M940.500 296l-1.500 4l4 5"/>
<path d="M952.2 205.8H976.5V310.4H952.2ZM952.2 173.2H976.5V195H952.2ZM954.7 173.2V205.8M962.8 173.2V192M969.2 173.2V192M973.5 173.2V205.8M954.7 192H973.5M954.7 195H973.5"/>
<path d="M955.5 205.8V310.4" stroke="#848484"/>
<path d="M964.2 199.5H967.2Q968.7 199.5 968.7 201.0V203.0Q968.7 204.5 967.2 204.5H964.2Q962.7 204.5 962.7 203.0V201.0Q962.7 199.5 964.2 199.5ZM962.7 214.2a3 3 0 1 0 6 0a3 3 0 1 0 -6 0M962.7 301.5a3 3 0 1 0 6 0a3 3 0 1 0 -6 0M958.5 257.7a7.2 7.2 0 1 0 14.4 0a7.2 7.2 0 1 0 -14.4 0M960.2 257.7a5.5 5.5 0 1 0 11.0 0a5.5 5.5 0 1 0 -11.0 0M962.5 257.7a3.2 3.2 0 1 0 6.4 0a3.2 3.2 0 1 0 -6.4 0"/>
<path d="M943 184.4H947V192.2H943ZM947 185.5H952V191H947ZM952 178V205M978.500 186V193M981.500 190V193"/>
<path d="M951.500 216.500q-2.500 2-2.500 10t2.500 10" stroke-width="2"/>
<path d="M978.3 193.2H983.2V255.4H978.3ZM983.200 202H994q2.800 0 2.800 3V246.600q0 3-2.800 3H983.200M994 202V249.6"/>
<path d="M1042 202.300H1031.800q-2.800 0-2.800 3V246.200q0 3 2.800 3H1042M1031.5 202.3V249.2M1042 196.1H1048.5V255.4H1042ZM1043.5 196.1H1047V255.4H1043.5Z"/>
<path d="M1049.4 205.2H1073.7V310.4H1049.4ZM1057.5 214.2a3 3 0 1 0 6 0a3 3 0 1 0 -6 0M1057.5 301.5a3 3 0 1 0 6 0a3 3 0 1 0 -6 0M1054.8 257.7a5.7 5.7 0 1 0 11.4 0a5.7 5.7 0 1 0 -11.4 0M1057.0 257.7a3.5 3.5 0 1 0 7.0 0a3.5 3.5 0 1 0 -7.0 0M1073.700 215.500q3 1 3 4V232q0 3-3 4"/>
<path d="M1078 274H1081Q1085 274 1085 278V307.8Q1085 311.8 1081 311.8H1078Q1074 311.8 1074 307.8V278Q1074 274 1078 274ZM1077 276V309M1080.500 275V310M1076 285h6M1076 297h6"/>
<path d="M945.800 225.500H1083.300" stroke="#f00" stroke-dasharray="22 4 5 4"/>
<path d="M1013.500 177V365" stroke="#f00" stroke-dasharray="40 3 4 3"/>
<path d="M976.500 281.600H1049.400M976.500 271H980l3 8M1049.400 271H1046l-3 8M983 281.600q6-3 12-3M1043 281.600q-6-3-12-3M986 279H998M1028 279H1040"/>
<path d="M976.5 281.6V344.8M982.4 281.6V344.8M976.500 344.800L995 365M982.400 344.800L999 365M1045.900 281.600V344M1049.400 310.400V344M1045.900 344L1031 365M1049.400 344L1035 365M978 344l3 4M1047 344l-3 4"/>
<path d="M1017.800 283.600V291L1008.500 292V302.75L1017.800 303.75V317.5L1008.500 318.5V330.25L1017.800 331.25V345.6L1008.500 346.6V357.75L1017.800 358.75V366"/>
<path d="M957.6 310.4V365M961.5 310.4V365M964.8 310.4V352M970.2 310.4V365M968.8 325.4H976V338.6H968.8ZM957.600 352.600l-5 6v6M961.500 352l3-3"/>
<path d="M1051.8 323.4H1058Q1059 323.4 1059 324.4V338Q1059 339 1058 339H1051.8Q1050.8 339 1050.8 338V324.4Q1050.8 323.4 1051.8 323.4ZM1059 325.500h2.500q1.500 0 1.500 2V335q0 2-1.500 2H1059M1050 318l1.500 5M1050 344l1.500-5"/>
<path d="M824.4 356.5H870V366H824.4ZM838 356.5V366M860 356.5V366M838 360H860M840 362h6v4"/>
<path d="M1099.5 169V249M1031.4 249.5H1146.5M1136.5 169V365" stroke="#7e7e7e"/>
<path d="M1097.500 169h4v6l-2 4l-2-4zM1097.500 236h4v7l-2 5l-2-5zM1134.500 263h4v-7l-2-5l-2 5z" stroke="#7e7e7e" fill="#7e7e7e"/>
<text transform="translate(1130,232) rotate(-90)" font-family="Liberation Mono,monospace" font-size="15" fill="#e8e8e8" stroke="none" textLength="70" lengthAdjust="spacing">149,75mm</text>
<path d="M1285.300 195.700L1333.500 173.200H1371.800L1421.400 195.700M1277.1 195.1H1284.5V256H1277.1ZM1421.4 195.1H1428.7V256H1421.4ZM1280 197V254M1425.5 197V254M1284.500 256L1322.200 304M1421.400 256L1387.300 299.100"/>
<path d="M1337.8 225.3L1341.0 226.2L1340.9 227.3L1337.7 227.8L1337.5 228.9L1340.5 230.3L1340.3 231.3L1337.0 231.3L1336.7 232.3L1339.4 234.2L1339.1 235.2L1335.8 234.7L1335.3 235.7L1337.7 237.9L1337.2 238.8L1334.1 237.8L1333.4 238.7L1335.5 241.3L1334.8 242.1L1331.9 240.6L1331.1 241.4L1332.7 244.3L1331.9 245.0L1329.3 243.1L1328.4 243.7L1329.5 246.8L1328.7 247.4L1326.3 245.1L1325.4 245.6L1326.0 248.9L1325.0 249.3L1323.1 246.6L1322.0 247.0L1322.2 250.3L1321.1 250.6L1319.6 247.6L1318.6 247.8L1318.2 251.1L1317.1 251.2L1316.1 248.1L1315.0 248.1L1314.1 251.3L1313.0 251.2L1312.5 248.0L1311.4 247.8L1310.0 250.8L1309.0 250.6L1309.0 247.3L1308.0 247.0L1306.1 249.7L1305.1 249.4L1305.6 246.1L1304.6 245.6L1302.4 248.0L1301.5 247.5L1302.5 244.4L1301.6 243.7L1299.0 245.8L1298.2 245.1L1299.7 242.2L1298.9 241.4L1296.0 243.0L1295.3 242.2L1297.2 239.6L1296.6 238.7L1293.5 239.8L1292.9 239.0L1295.2 236.6L1294.7 235.7L1291.4 236.3L1291.0 235.3L1293.7 233.4L1293.3 232.3L1290.0 232.5L1289.7 231.4L1292.7 229.9L1292.5 228.9L1289.2 228.5L1289.1 227.4L1292.2 226.4L1292.2 225.3L1289.0 224.4L1289.1 223.3L1292.3 222.8L1292.5 221.7L1289.5 220.3L1289.7 219.3L1293.0 219.3L1293.3 218.3L1290.6 216.4L1290.9 215.4L1294.2 215.9L1294.7 214.9L1292.3 212.7L1292.8 211.8L1295.9 212.8L1296.6 211.9L1294.5 209.3L1295.2 208.5L1298.1 210.0L1298.9 209.2L1297.3 206.3L1298.1 205.6L1300.7 207.5L1301.6 206.9L1300.5 203.8L1301.3 203.2L1303.7 205.5L1304.6 205.0L1304.0 201.7L1305.0 201.3L1306.9 204.0L1308.0 203.6L1307.8 200.3L1308.9 200.0L1310.4 203.0L1311.4 202.8L1311.8 199.5L1312.9 199.4L1313.9 202.5L1315.0 202.5L1315.9 199.3L1317.0 199.4L1317.5 202.6L1318.6 202.8L1320.0 199.8L1321.0 200.0L1321.0 203.3L1322.0 203.6L1323.9 200.9L1324.9 201.2L1324.4 204.5L1325.4 205.0L1327.6 202.6L1328.5 203.1L1327.5 206.2L1328.4 206.9L1331.0 204.8L1331.8 205.5L1330.3 208.4L1331.1 209.2L1334.0 207.6L1334.7 208.4L1332.8 211.0L1333.4 211.9L1336.5 210.8L1337.1 211.6L1334.8 214.0L1335.3 214.9L1338.6 214.3L1339.0 215.3L1336.3 217.2L1336.7 218.3L1340.0 218.1L1340.3 219.2L1337.3 220.7L1337.5 221.7L1340.8 222.1L1340.9 223.2L1337.8 224.2Z"/>
<path d="M1293.5 225.3a21.5 21.5 0 1 0 43.0 0a21.5 21.5 0 1 0 -43.0 0M1294.7 225.3a20.3 20.3 0 1 0 40.6 0a20.3 20.3 0 1 0 -40.6 0" stroke="#848484"/>
<path d="M1300 225.3a15 15 0 1 0 30 0a15 15 0 1 0 -30 0M1303.5 225.3a11.5 11.5 0 1 0 23.0 0a11.5 11.5 0 1 0 -23.0 0M1306.5 225.3a8.5 8.5 0 1 0 17.0 0a8.5 8.5 0 1 0 -17.0 0"/>
<path d="M1301.8 225.3a13.2 13.2 0 1 0 26.4 0a13.2 13.2 0 1 0 -26.4 0" stroke-dasharray="2.500 1.500" stroke-width="2.400"/>
<path d="M1413.4 225.3L1416.6 226.2L1416.5 227.3L1413.3 227.8L1413.1 228.9L1416.1 230.3L1415.9 231.3L1412.6 231.3L1412.3 232.3L1415.0 234.2L1414.7 235.2L1411.4 234.7L1410.9 235.7L1413.3 237.9L1412.8 238.8L1409.7 237.8L1409.0 238.7L1411.1 241.3L1410.4 242.1L1407.5 240.6L1406.7 241.4L1408.3 244.3L1407.5 245.0L1404.9 243.1L1404.0 243.7L1405.1 246.8L1404.3 247.4L1401.9 245.1L1401.0 245.6L1401.6 248.9L1400.6 249.3L1398.7 246.6L1397.6 247.0L1397.8 250.3L1396.7 250.6L1395.2 247.6L1394.2 247.8L1393.8 251.1L1392.7 251.2L1391.7 248.1L1390.6 248.1L1389.7 251.3L1388.6 251.2L1388.1 248.0L1387.0 247.8L1385.6 250.8L1384.6 250.6L1384.6 247.3L1383.6 247.0L1381.7 249.7L1380.7 249.4L1381.2 246.1L1380.2 245.6L1378.0 248.0L1377.1 247.5L1378.1 244.4L1377.2 243.7L1374.6 245.8L1373.8 245.1L1375.3 242.2L1374.5 241.4L1371.6 243.0L1370.9 242.2L1372.8 239.6L1372.2 238.7L1369.1 239.8L1368.5 239.0L1370.8 236.6L1370.3 235.7L1367.0 236.3L1366.6 235.3L1369.3 233.4L1368.9 232.3L1365.6 232.5L1365.3 231.4L1368.3 229.9L1368.1 228.9L1364.8 228.5L1364.7 227.4L1367.8 226.4L1367.8 225.3L1364.6 224.4L1364.7 223.3L1367.9 222.8L1368.1 221.7L1365.1 220.3L1365.3 219.3L1368.6 219.3L1368.9 218.3L1366.2 216.4L1366.5 215.4L1369.8 215.9L1370.3 214.9L1367.9 212.7L1368.4 211.8L1371.5 212.8L1372.2 211.9L1370.1 209.3L1370.8 208.5L1373.7 210.0L1374.5 209.2L1372.9 206.3L1373.7 205.6L1376.3 207.5L1377.2 206.9L1376.1 203.8L1376.9 203.2L1379.3 205.5L1380.2 205.0L1379.6 201.7L1380.6 201.3L1382.5 204.0L1383.6 203.6L1383.4 200.3L1384.5 200.0L1386.0 203.0L1387.0 202.8L1387.4 199.5L1388.5 199.4L1389.5 202.5L1390.6 202.5L1391.5 199.3L1392.6 199.4L1393.1 202.6L1394.2 202.8L1395.6 199.8L1396.6 200.0L1396.6 203.3L1397.6 203.6L1399.5 200.9L1400.5 201.2L1400.0 204.5L1401.0 205.0L1403.2 202.6L1404.1 203.1L1403.1 206.2L1404.0 206.9L1406.6 204.8L1407.4 205.5L1405.9 208.4L1406.7 209.2L1409.6 207.6L1410.3 208.4L1408.4 211.0L1409.0 211.9L1412.1 210.8L1412.7 211.6L1410.4 214.0L1410.9 214.9L1414.2 214.3L1414.6 215.3L1411.9 217.2L1412.3 218.3L1415.6 218.1L1415.9 219.2L1412.9 220.7L1413.1 221.7L1416.4 222.1L1416.5 223.2L1413.4 224.2Z"/>
<path d="M1369.1 225.3a21.5 21.5 0 1 0 43.0 0a21.5 21.5 0 1 0 -43.0 0M1370.3 225.3a20.3 20.3 0 1 0 40.6 0a20.3 20.3 0 1 0 -40.6 0" stroke="#848484"/>
<path d="M1375.6 225.3a15 15 0 1 0 30 0a15 15 0 1 0 -30 0M1379.1 225.3a11.5 11.5 0 1 0 23.0 0a11.5 11.5 0 1 0 -23.0 0M1382.1 225.3a8.5 8.5 0 1 0 17.0 0a8.5 8.5 0 1 0 -17.0 0"/>
<path d="M1377.3999999999999 225.3a13.2 13.2 0 1 0 26.4 0a13.2 13.2 0 1 0 -26.4 0" stroke-dasharray="2.500 1.500" stroke-width="2.400"/>
<path d="M1328.400 205.200H1377.200V309.800H1328.400Z" fill="#000"/>
<path d="M1334.800 202Q1352.500 186 1372.800 202"/>
<path d="M1340 197.500l1-3l2 2l1-3.500l2 2.500l1.500-3.500l2 3l1.500-3.500l2 3l2-3l1.500 3l2-2.500l1 3l2-2l1 3"/>
<path d="M1332.3 205.2V309.8M1373.7 205.2V309.8" stroke="#848484"/>
<path d="M1342.7 225.8a10 10 0 1 0 20 0a10 10 0 1 0 -20 0M1361 218.500l3.500 7l-3.500 7M1344.2 225.8a8.5 8.5 0 1 0 17.0 0a8.5 8.5 0 1 0 -17.0 0"/>
<path d="M1335.7 290.5a17 17 0 1 0 34 0a17 17 0 1 0 -34 0M1337.7 290.5a15 15 0 1 0 30 0a15 15 0 1 0 -30 0M1343.7 288a9 9 0 1 0 18 0a9 9 0 1 0 -18 0M1350.500 296.500V305M1355 296.500V305M1350.500 275.500V279M1355 275.500V279"/>
<path d="M1329.4 309.8H1376.6V366H1329.4ZM1346.2 332.2a6.5 6.5 0 1 0 13.0 0a6.5 6.5 0 1 0 -13.0 0M1348.7 332.2a4 4 0 1 0 8 0a4 4 0 1 0 -8 0"/>
<path d="M1329.4 344.8H1376.6M1329.4 348.3H1376.6" stroke="#848484"/>
<path d="M1314.7 188.3a5 5 0 1 0 10 0a5 5 0 1 0 -10 0M1317.2 188.3a2.5 2.5 0 1 0 5.0 0a2.5 2.5 0 1 0 -5.0 0"/>
<path d="M1381.4 188.3a5 5 0 1 0 10 0a5 5 0 1 0 -10 0M1383.9 188.3a2.5 2.5 0 1 0 5.0 0a2.5 2.5 0 1 0 -5.0 0"/>
<path d="M1314.7 285.5a5 5 0 1 0 10 0a5 5 0 1 0 -10 0M1317.2 285.5a2.5 2.5 0 1 0 5.0 0a2.5 2.5 0 1 0 -5.0 0"/>
<path d="M1381.4 285.5a5 5 0 1 0 10 0a5 5 0 1 0 -10 0M1383.9 285.5a2.5 2.5 0 1 0 5.0 0a2.5 2.5 0 1 0 -5.0 0"/>
<path d="M1321.8 252.5H1328.4V263.2H1321.8ZM1377.2 250.5H1387.3V264.1H1377.2ZM1381 250.5V264.1M1384 250.5V264.1"/>
<path d="M1317.300 302H1323.200V340M1317.300 302V332M1314 332h9v6l-3 3M1323.200 304H1328.400M1323.200 345V366M1326 345V366M1318 340h5.500v5"/>
<path d="M1377.2 299.5H1842.7M1376.6 364.5H1826"/>
<path d="M1450 208.500H1766q2.500 0 2.500 2.500V221.400M1509 212H1709"/>
<path d="M1454.1 212.6H1505.4Q1509.4 212.6 1509.4 216.6V236.4Q1509.4 240.4 1505.4 240.4H1454.1Q1450.1 240.4 1450.1 236.4V216.6Q1450.1 212.6 1454.1 212.6ZM1456.1 214.3H1503.4Q1506.4 214.3 1506.4 217.3V235.6Q1506.4 238.6 1503.4 238.6H1456.1Q1453.1 238.6 1453.1 235.6V217.3Q1453.1 214.3 1456.1 214.3ZM1455.8 216H1503.7V231H1455.8Z"/>
<path d="M1457.6 218H1501.9V229H1457.6Z" stroke="#848484"/>
<path d="M1459.1 231v3h5M1500.4 231v3h-5M1478.1 240.400V285M1485.1 240.400V285M1480.6 240.400V281M1478.1 240.400q-1-3.500-5-3.500M1485.1 240.400q1-3.500 5-3.500"/>
<path d="M1713 212.6H1762.3Q1766.3 212.6 1766.3 216.6V236.4Q1766.3 240.4 1762.3 240.4H1713Q1709 240.4 1709 236.4V216.6Q1709 212.6 1713 212.6ZM1715 214.3H1760.3Q1763.3 214.3 1763.3 217.3V235.6Q1763.3 238.6 1760.3 238.6H1715Q1712 238.6 1712 235.6V217.3Q1712 214.3 1715 214.3ZM1714.7 216H1760.6V231H1714.7Z"/>
<path d="M1716.5 218H1758.8V229H1716.5Z" stroke="#848484"/>
<path d="M1718 231v3h5M1757.3 231v3h-5M1735.1 240.400V285M1742.1 240.400V285M1737.6 240.400V281M1735.1 240.400q-1-3.500-5-3.500M1742.1 240.400q1-3.500 5-3.500"/>
<path d="M1471.8999999999999 198H1491.3V208.5H1471.8999999999999ZM1477.8 188.3H1485.3999999999999Q1486.8999999999999 188.3 1486.8999999999999 189.8V196.5Q1486.8999999999999 198 1485.3999999999999 198H1477.8Q1476.3 198 1476.3 196.5V189.8Q1476.3 188.3 1477.8 188.3ZM1476.6 198V208.5M1486.6 198V208.5"/>
<path d="M1728.8 198H1748.2V208.5H1728.8ZM1734.7 188.3H1742.3Q1743.8 188.3 1743.8 189.8V196.5Q1743.8 198 1742.3 198H1734.7Q1733.2 198 1733.2 196.5V189.8Q1733.2 188.3 1734.7 188.3ZM1733.5 198V208.5M1743.5 198V208.5"/>
<path d="M1420 281.3H1444.3V299.1H1420ZM1430.6 289.6a3 3 0 1 0 6 0a3 3 0 1 0 -6 0"/>
<path d="M1518.6 281.3H1542.3V299.1H1518.6ZM1525.7 289.6a3 3 0 1 0 6 0a3 3 0 1 0 -6 0"/>
<path d="M1679.3 281.3H1700.6V299.1H1679.3ZM1687.5 289.6a3 3 0 1 0 6 0a3 3 0 1 0 -6 0"/>
<path d="M1420 281.300l-3 6v11.800M1444.300 281.300V299"/>
<path d="M1446.2 299.100V273q0-2 2-2H1449.5q2 0 2 2V299.100"/>
<path d="M1511.7 299.100V273q0-2 2-2H1514.2q2 0 2 2V299.100"/>
<path d="M1702.2 299.100V273q0-2 2-2H1706q2 0 2 2V299.100"/>
<path d="M1768.3 299.100V273q0-2 2-2H1772.1q2 0 2 2V299.100"/>
<path d="M1453.6 278H1464.6V299.1H1453.6ZM1498.6 278H1509.6V299.1H1498.6ZM1466.6 281H1473.6V299.1H1466.6ZM1489.6 281H1496.6V299.1H1489.6ZM1472.6 285q0-8 5.500-10M1490.6 285q0-8-5.500-10M1464.6 285.5H1498.6M1456.6 287H1461.6V299H1456.6ZM1501.6 287H1506.6V299H1501.6Z"/>
<path d="M1456.6 290H1461.6M1456.6 293H1461.6M1456.6 296H1461.6M1501.6 290H1506.6M1501.6 293H1506.6M1501.6 296H1506.6" stroke="#848484"/>
<path d="M1710.6 278H1721.6V299.1H1710.6ZM1755.6 278H1766.6V299.1H1755.6ZM1723.6 281H1730.6V299.1H1723.6ZM1746.6 281H1753.6V299.1H1746.6ZM1729.6 285q0-8 5.500-10M1747.6 285q0-8-5.500-10M1721.6 285.5H1755.6M1713.6 287H1718.6V299H1713.6ZM1758.6 287H1763.6V299H1758.6Z"/>
<path d="M1713.6 290H1718.6M1713.6 293H1718.6M1713.6 296H1718.6M1758.6 290H1763.6M1758.6 293H1763.6M1758.6 296H1763.6" stroke="#848484"/>
<path d="M1463.1 295.75000000000006a3.4500000000000455 3.4500000000000455 0 0 1 6.900000000000091 0V368.04999999999995a3.4500000000000455 3.4500000000000455 0 0 1 -6.900000000000091 0Z" fill="#000"/>
<path d="M1492.7 295.7a3.3999999999999773 3.3999999999999773 0 0 1 6.7999999999999545 0V368.1a3.3999999999999773 3.3999999999999773 0 0 1 -6.7999999999999545 0Z" fill="#000"/>
<path d="M1719.7 295.7a3.3999999999999773 3.3999999999999773 0 0 1 6.7999999999999545 0V368.1a3.3999999999999773 3.3999999999999773 0 0 1 -6.7999999999999545 0Z" fill="#000"/>
<path d="M1749.8 295.7a3.3999999999999773 3.3999999999999773 0 0 1 6.7999999999999545 0V368.1a3.3999999999999773 3.3999999999999773 0 0 1 -6.7999999999999545 0Z" fill="#000"/>
<path d="M1541.9 225.2H1597.2V299.1H1541.9ZM1597.2 224.7H1678.5V299.1H1597.2ZM1555 299.100V241q0-2.500 2.500-2.500H1597.200M1558.500 299.100V243.500q0-2 2-2H1597.200"/>
<path d="M1599.5 226V299.1M1676 226V299.1M1599.5 227H1676" stroke="#848484"/>
<path d="M1576.4 169V198M1585.6 169V198M1634.2 169V198M1643.9 169V198M1576.4 189H1585.6"/>
<path d="M1560 198.4H1597.5Q1599.5 198.4 1599.5 200.4V206.5Q1599.5 208.5 1597.5 208.5H1560Q1558 208.5 1558 206.5V200.4Q1558 198.4 1560 198.4ZM1565 200.5H1576V206.5H1565ZM1578 200.5H1590V206.5H1578ZM1566 212H1576V222H1566ZM1578 212H1588V222H1578ZM1573 222H1583V232H1573ZM1566 232H1576V238H1566ZM1578 232H1588V238H1578ZM1563 238H1597V241.5H1563ZM1562 208.5H1595Q1597 208.5 1597 210.5V223Q1597 225 1595 225H1562Q1560 225 1560 223V210.5Q1560 208.5 1562 208.5Z"/>
<path d="M1622.5 198.4H1653Q1655 198.4 1655 200.4V206.5Q1655 208.5 1653 208.5H1622.5Q1620.5 208.5 1620.5 206.5V200.4Q1620.5 198.4 1622.5 198.4ZM1622.5 204H1653V208.5H1622.5ZM1624 212H1652V218H1624ZM1622 218H1654V223.7H1622ZM1636.5 204V223.7M1640.5 204V223.7M1621 201H1655"/>
<path d="M1774.1 248.6H1798.4V271H1774.1ZM1779 248.6V266M1784 248.6V266M1789 248.6V266M1794 248.6V266M1774.1 266H1798.4M1774.1 268.5H1798.4M1800.9 259.3H1804.7Q1807.2 259.3 1807.2 261.8V265.5Q1807.2 268 1804.7 268H1800.9Q1798.4 268 1798.4 265.5V261.8Q1798.4 259.3 1800.9 259.3ZM1774.100 259l-3 3v9"/>
<path d="M1774.1 271H1801.3V299.1H1774.1ZM1774.1 281.3H1801.3M1782.2 277.4a3 3 0 1 0 6 0a3 3 0 1 0 -6 0M1782.2 289.4a3 3 0 1 0 6 0a3 3 0 1 0 -6 0M1796.5 271V299.1M1801.300 278L1816.900 274.800M1803 284v8"/>
<path d="M1816.9 265H1842.7V299.1H1816.9ZM1824 267V290"/>
<path d="M1824 269H1842.7M1824 272H1842.7M1824 275.5H1842.7M1824 279H1842.7M1824 283H1842.7M1822 288H1842.7M1822 291H1842.7M1824 296.5H1842.7" stroke="#848484"/>
<path d="M1833.5 251.5H1839.7Q1842.7 251.5 1842.7 254.5V259.2Q1842.7 262.2 1839.7 262.2H1833.5Q1830.5 262.2 1830.5 259.2V254.5Q1830.5 251.5 1833.5 251.5ZM1834 252V262"/>
<path d="M1836.5 225.5a30 30 0 1 0 60 0a30 30 0 1 0 -60 0"/>
<path d="M1842.700 205.200H1890V368.100H1842.700Z" fill="#000"/>
<path d="M1842.7 205.2H1890V309.8H1842.7ZM1842.700 309.800V368.100H1890M1846.5 205.2V309.8"/>
<path d="M1856.5 225.8a10 10 0 1 0 20 0a10 10 0 1 0 -20 0M1858.0 225.8a8.5 8.5 0 1 0 17.0 0a8.5 8.5 0 1 0 -17.0 0M1875 219l3 6.500l-3 6.500"/>
<path d="M1849.0 289a17.5 17.5 0 1 0 35.0 0a17.5 17.5 0 1 0 -35.0 0M1851.0 289a15.5 15.5 0 1 0 31.0 0a15.5 15.5 0 1 0 -31.0 0M1857.5 291a9 9 0 1 0 18 0a9 9 0 1 0 -18 0M1864 274V283M1869 274V283M1864 299.500V303M1869 299.500V303"/>
<path d="M1860.0 332.2a6.5 6.5 0 1 0 13.0 0a6.5 6.5 0 1 0 -13.0 0M1862.5 332.2a4 4 0 1 0 8 0a4 4 0 1 0 -8 0"/>
<path d="M1842.7 344.8H1887M1842.7 348.3H1887" stroke="#848484"/>
<path d="M1866.500 184.400V435" stroke="#f00" stroke-dasharray="38 3 4 3"/>
<path d="M1352.700 169V362" stroke="#f00" stroke-dasharray="38 3 4 3"/>
<path d="M1306 332.500H1887" stroke="#f00" stroke-dasharray="28 5.500 5.200 5.500" stroke-dashoffset="15"/>
<path d="M1512.7 364.5V439M1517.3 364.5V439M1702.9 364.5V439M1707.5 364.5V439M1769.3 364.5V439M1774.4 364.5V443M1468 438.5H1769.3M1468 442.8H1774.4"/>
<path d="M1464.7 406.1a18.3 18.3 0 1 0 36.6 0a18.3 18.3 0 1 0 -36.6 0M1466.7 406.1a16.3 16.3 0 1 0 32.6 0a16.3 16.3 0 1 0 -32.6 0M1717.8 406.1a20.2 20.2 0 1 0 40.4 0a20.2 20.2 0 1 0 -40.4 0M1720.1 406.1a17.9 17.9 0 1 0 35.8 0a17.9 17.9 0 1 0 -35.8 0M1729 438.500L1738 428L1747 438.500M1474 438.500L1483 428L1492 438.500"/>
<path d="M1724 378q3 8 8 9M1752 378q-3 8-8 9M1469 378q3 8 8 9M1497 378q-3 8-8 9M1707.5 378H1769.3M1468 378H1512.7"/>
<path d="M1593.6 406.6a16 16 0 1 0 32 0a16 16 0 1 0 -32 0M1600.6 408a9 9 0 1 0 18 0a9 9 0 1 0 -18 0M1598 400q11-9 23 0M1600 403q9.500-7 19 0M1606 419.500l3.500-5l3.500 5"/>
<path d="M1517.3 364.5H1543V385.5H1517.3ZM1526.2 377a2.5 2.5 0 1 0 5.0 0a2.5 2.5 0 1 0 -5.0 0"/>
<path d="M1676.5 364.5H1702.9V385.5H1676.5ZM1687.8 377a2.5 2.5 0 1 0 5.0 0a2.5 2.5 0 1 0 -5.0 0"/>
<path d="M1774.4 364.5H1799V385.5H1774.4ZM1782.9 377a2.5 2.5 0 1 0 5.0 0a2.5 2.5 0 1 0 -5.0 0"/>
<path d="M1538 364.5V385.5M1681 364.5V385.5M1543 372q4 0 4 5t-4 5M1676.500 372q-4 0-4 5t4 5M1799 366v12l6-3v-8M1801 366v8M1808 366v6M1815 366.5H1826"/>
<path d="M1551.7 371.5H1668M1551.7 374.5H1669M1551.7 366V380M1667.5 365V371M1669.5 365V375M1673 366V380"/>
<path d="M1551.7 378.5H1673" stroke="#848484"/>
<path d="M1517.3 400.4H1526V414.2H1517.3ZM1693.3 400.4H1702.9V414.2H1693.3Z"/>
<path d="M1774.4 398.1H1781V415.3H1774.4ZM1781 399.500h3.500q3.200 0 3.200 3.500v7q0 3.500-3.200 3.500H1781"/>
<path d="M1755.600 442.800V449q0 2 2 2H1771q2 0 2-2V442.800M1758 451v4q0 2.500 3 2.500h6q3 0 3-2.500v-4M1762 443V451M1767 443V451"/>
<path d="M1480 364.5H1487V374H1480Z"/>
<path d="M1493.2 364.5H1500.8V374H1493.2Z"/>
<path d="M1506 364.5H1510V374H1506Z"/>
<path d="M1709.5 364.5H1714.5V374H1709.5Z"/>
<path d="M1762 364.5H1767V374H1762Z"/>
<path d="M1842.7 350H1890V367.9H1842.7ZM1826 374H1887M1826 364.500V377"/>
<path d="M1890 377H1822q-2.200 0-2.200 2.500V412.500q0 2.800 2.200 2.800H1890M1821.600 415.300V421H1890M1821.600 408.400H1890M1835.2 392a7.5 7.5 0 1 0 15.0 0a7.5 7.5 0 1 0 -15.0 0M1859.2 392a7.5 7.5 0 1 0 15.0 0a7.5 7.5 0 1 0 -15.0 0M1817.500 408v5l4 2"/>
<path d="M1885 391.500v2"/>
<path d="M607.800 451.100Q589 454 582 474Q579 483 577.800 493.300Q551 506 549.600 536.700Q550 566 567.300 582.200Q563 595 564.400 603.300Q566 645 607.800 653.300" stroke="#ff7f00" stroke-width="1.200"/>
<path d="M326 711.5H620M326 729.5H620M326 739.5H620M326 749.5H620M326 767.5H620"/>
<path d="M326 714.5H620M326 735.5H620M326 743.5H620M326 763.5H620" stroke="#848484"/>
<path d="M326 817.5H687M326 862.5H687M326 873.5H575M661.3 873.5H725.5M326 917.5H575M661.3 917.5H725.5M725.5 795V955M776.5 795V955"/>
<path d="M326 820.5H687M326 859.5H687M326 876.5H575M661.3 876.5H725.5M326 915.5H575M661.3 915.5H725.5" stroke="#848484"/>
<path d="M687 814.3H720.8V863.7H687ZM720.8 811.9H724.9V864.9H720.8ZM687 836.7H724.9M687 838.7H724.9M704.5 833H710.5Q711.5 833 711.5 834V842Q711.5 843 710.5 843H704.5Q703.5 843 703.5 842V834Q703.5 833 704.5 833ZM705 843H710V848.5H705ZM707.5 833V848"/>
<path d="M722.8 811.9V864.9" stroke="#848484"/>
<path d="M575.1 872.1H661.3V921.4H575.1ZM575.1 895.9H661.3M575.1 897.9H661.3"/>
<path d="M612.5 869.7H625.1Q627.6 869.7 627.6 872.2V921.4Q627.6 923.9 625.1 923.9H612.5Q610 923.9 610 921.4V872.2Q610 869.7 612.5 869.7Z" fill="#000" stroke="#aaa"/>
<path d="M612 871V922.5M625.5 871V922.5" stroke="#848484"/>
<path d="M610 896.900H627.600" stroke-width="2"/>
<path d="M593.8 892H599.8Q600.8 892 600.8 893V901Q600.8 902 599.8 902H593.8Q592.8 902 592.8 901V893Q592.8 892 593.8 892ZM594.3 902H599.3V907H594.3ZM596.8 892V907"/>
<path d="M636.7 892H642.7Q643.7 892 643.7 893V901Q643.7 902 642.7 902H636.7Q635.7 902 635.7 901V893Q635.7 892 636.7 892ZM637.2 902H642.2V907H637.2ZM639.7 892V907"/>
<path d="M742.6999999999999 838.4a8.2 8.2 0 1 0 16.4 0a8.2 8.2 0 1 0 -16.4 0M746.3 838.4a4.6 4.6 0 1 0 9.2 0a4.6 4.6 0 1 0 -9.2 0" stroke-width="1.300"/>
<path d="M742.6999999999999 897.4a8.2 8.2 0 1 0 16.4 0a8.2 8.2 0 1 0 -16.4 0M746.3 897.4a4.6 4.6 0 1 0 9.2 0a4.6 4.6 0 1 0 -9.2 0" stroke-width="1.300"/>
<path d="M353.5 914.5H367.5V928.5H353.5Z"/>
<path d="M360.500 921.500V855.500M353.500 855.500H367.500L360.500 833.500Z" stroke="#0f0"/>
<path d="M361 921.500H425.500M425.500 913.500V928.500L448.500 921.500Z" stroke="#f00"/>
<path d="M354 803l6.500 7l6.500-7M360.500 810v7M465.100 913.700l12 15M477 913.700l-12 15" stroke-width="0.900"/>
<path d="M776.5 817.5H815M776.5 872.5H841.5M776.5 916.5H841.5M844.0 871.7H874.8Q877.3 871.7 877.3 874.2V916.4Q877.3 918.9 874.8 918.9H844.0Q841.5 918.9 841.5 916.4V874.2Q841.5 871.7 844.0 871.7ZM879.400 860V877.300q0 2.500 2.500 2.500H939q2.500 0 2.500-2.500V860M980.5 860V955M1045.5 860V955"/>
<path d="M776.5 820.5H815M776.5 875.5H841.5M776.5 913.5H841.5M843.5 873V917.5M875.3 873V917.5M881 877.5H940" stroke="#848484"/>
<path d="M1013.500 860V955" stroke="#f00" stroke-dasharray="38 3 4 3"/>
<path d="M1131.5 795V955M1196.5 795V955" stroke="#7e7e7e"/>
<path d="M1116 866H1122V872H1116Z"/>
<text transform="translate(1123.500,925) rotate(-90)" font-family="Liberation Mono,monospace" font-size="14.500" fill="#e8e8e8" stroke="none" textLength="43" lengthAdjust="spacing">300mm</text>
<text transform="translate(1190.500,930) rotate(-90)" font-family="Liberation Mono,monospace" font-size="14.500" fill="#e8e8e8" stroke="none" textLength="126" lengthAdjust="spacing">600mm [23,62in]</text>
</svg>
<div id="dlg" class="a" style="left:608px;top:365px;width:861px;height:431px;background:#cfcfcf;border:1px solid #d6d6d6">
<div class="a" style="left:6px;top:29px;width:847px;height:394px;background:#f0f0f0;border:1px solid #a9acb0;box-shadow:inset 1px 1px 0 #fafafa,inset -1px -1px 0 #fafafa"></div>
<div class="t" style="left:0;width:858px;text-align:center;top:6px;font-size:15.500px;color:#2e2e2e;letter-spacing:-0.200px">Open Drawing</div>
<svg style="left:8px;top:5px" width="18" height="18" viewBox="617 371 18 18"><path d="M626 372.300L633.700 380L626 387.700L618.300 380Z" fill="#8b008b" stroke="#111" stroke-width="1.200"/><rect x="624.300" y="379.300" width="6.400" height="8.600" fill="#ff0" stroke="#111" stroke-width="1"/><path d="M624.800 376h5.400l-2.700 3.500z" fill="#ff0"/></svg>
<div class="a" style="left:822px;top:0px;width:31px;height:20px;background:#c75050"></div>
<svg style="left:833px;top:5px" width="10" height="10"><path d="M1 1L9 9M9 1L1 9" stroke="#fff" stroke-width="1.700"/></svg>
<div class="t" style="left:61px;top:42px;font-size:12px;letter-spacing:-0.300px">Look in:</div>
<div class="a" style="left:106px;top:37px;width:261px;height:22px;background:#fff;border:1px solid #ababab"></div>
<svg style="left:112px;top:39px" width="16" height="18"><path d="M2 2.500h8l4 1.500v12H2z" fill="#e9c767" stroke="#c9a23c" stroke-width="0.800"/><path d="M9 3l3 1v12l-3-1z" fill="#f7e3a1"/><rect x="11" y="10" width="2" height="3" fill="#7ab0e0"/></svg>
<div class="t" style="left:131px;top:42px;font-size:12px;letter-spacing:-0.300px">flexcrane</div>
<svg style="left:353px;top:45px" width="10" height="8"><path d="M1 1.500l4 4l4-4" fill="none" stroke="#444" stroke-width="1.500"/></svg>
<svg style="left:380px;top:38px" width="100" height="22" viewBox="989 404 100 22"><defs><radialGradient id="bk" cx="0.500" cy="0.350" r="0.700"><stop offset="0" stop-color="#a8a8a8"/><stop offset="0.600" stop-color="#6a6a6a"/><stop offset="1" stop-color="#3a3a3a"/></radialGradient></defs><circle cx="999" cy="414.200" r="7.600" fill="url(#bk)" stroke="#4a4a4a" stroke-width="0.800"/><path d="M1003 414.200h-7M999 410.800l-3.500 3.400l3.500 3.400" fill="none" stroke="#fff" stroke-width="1.700"/><path d="M1015.500 421.500v-10h4l1 1.500h5v2" fill="#f3dc8c" stroke="#d2a83c" stroke-width="0.900"/><path d="M1015.500 421.500l3-7.500h10l-3 7.500z" fill="#faeeb4" stroke="#d2a83c" stroke-width="0.900"/><path d="M1021.500 418.500c3-2 3.500-5 3-8h-2.500l4-4.500l3.500 5h-2.200c0.500 4-1.500 7-4 8.500z" fill="#3cb43c" stroke="#1c7a1c" stroke-width="0.700"/><path d="M1038.500 420.500v-10.500h4l1 1.500h5v2" fill="#f3dc8c" stroke="#d2a83c" stroke-width="0.900"/><path d="M1038.500 420.500l3-7h11l-4 7z" fill="#faeeb4" stroke="#d2a83c" stroke-width="0.900"/><path d="M1050 407v7M1046.500 410.500h7M1047.500 408l5 5M1052.500 408l-5 5" stroke="#f0301c" stroke-width="1.100"/><circle cx="1050" cy="410.500" r="1.600" fill="#fce88a"/><rect x="1061.500" y="407.500" width="14" height="13" rx="1" fill="#fff" stroke="#2a6ad8" stroke-width="1.300"/><path d="M1061.500 408h14v2.500h-14z" fill="#2a6ad8"/><rect x="1064" y="412" width="2" height="2" fill="#8a8ab8"/><rect x="1068" y="412" width="2" height="2" fill="#1a5ad0"/><rect x="1072" y="412" width="2" height="2" fill="#1a8a2a"/><rect x="1064" y="416.500" width="2" height="2" fill="#e85a4a"/><rect x="1068" y="416.500" width="2" height="2" fill="#0a1a8a"/><rect x="1072" y="416.500" width="2" height="2" fill="#d8801c"/><path d="M1078 412h7.500l-3.750 4z" fill="#222"/></svg>
<div class="a" style="left:13px;top:66px;width:87px;height:337px;background:#f5f5f5"></div>
<svg width="0" height="0" style="left:0;top:0"><defs><linearGradient id="scr" x1="0" y1="0" x2="1" y2="1"><stop offset="0" stop-color="#5a9af0"/><stop offset="0.450" stop-color="#2a64d4"/><stop offset="0.500" stop-color="#1840b0"/><stop offset="1" stop-color="#2a58c8"/></linearGradient><linearGradient id="fol" x1="0" y1="0" x2="0" y2="1"><stop offset="0" stop-color="#fbf0c0"/><stop offset="1" stop-color="#f0d47a"/></linearGradient><radialGradient id="glb" cx="0.350" cy="0.300" r="0.800"><stop offset="0" stop-color="#8ad0f8"/><stop offset="0.600" stop-color="#2a7fd8"/><stop offset="1" stop-color="#1a4a98"/></radialGradient></defs></svg>
<svg style="left:40px;top:73px" width="32" height="32"><circle cx="10" cy="9" r="8" fill="#eef2f6" stroke="#9aa8b8"/><path d="M10 3.500v5.500h4" fill="none" stroke="#8894a4" stroke-width="1.200"/><path d="M15 3l10 1.500l-1 12l-10-1z" fill="#fbfbfb" stroke="#b0b4b8" stroke-width="0.800"/><path d="M17 6l6 1M17 8.500l6 1" stroke="#9ab" stroke-width="0.800"/><rect x="18" y="9" width="5" height="4" fill="#5a9ad8"/><path d="M3 23l4-9h19l4 9z" fill="#d4dae2" stroke="#8a94a0" stroke-width="0.800"/><path d="M8 12l13-1l1 10l-13 1z" fill="#4a90d8" stroke="#fff" stroke-width="1"/><path d="M9 21l5-5l3 2.500l4-3.500l1 5.500z" fill="#3a8a3a"/><path d="M3 23h27v3.500H3z" fill="#b4bcc6" stroke="#8a94a0" stroke-width="0.600"/></svg>
<div class="t" style="left:13px;width:87px;text-align:center;top:107px;font-size:12px;letter-spacing:-0.300px">Recent places</div>
<svg style="left:40px;top:135px" width="32" height="32"><rect x="1.500" y="4.500" width="29" height="22" fill="url(#scr)" stroke="#b4bcc8" stroke-width="1.200"/><rect x="2" y="21.500" width="28" height="4" fill="#3a5488"/><path d="M2 21.500h28" stroke="#8aa8e0" stroke-width="0.800"/></svg>
<div class="t" style="left:13px;width:87px;text-align:center;top:167px;font-size:12px;letter-spacing:-0.300px">Desktop</div>
<svg style="left:40px;top:195px" width="32" height="32"><path d="M2.500 8h9l2-2.500h10l2 2.500h4v20H2.500z" fill="#e8c868" stroke="#c9a23c" stroke-width="0.800"/><rect x="7" y="4.500" width="4" height="3" fill="#3a9a3a"/><rect x="13.500" y="5.500" width="4" height="3" fill="#d83a3a"/><rect x="21" y="7" width="5" height="3" fill="#4a90d8"/><path d="M2.500 11h27v17H2.500z" fill="url(#fol)" stroke="#c9a23c" stroke-width="0.800"/><path d="M5 28v-8q0-2.500 2.500-2.500h17q2.500 0 2.500 2.500v8h-5v-5.500H10V28z" fill="#7ab8ec" stroke="#3a84c8" stroke-width="0.900"/><path d="M7 20h18" stroke="#c4e0f8" stroke-width="1.500"/></svg>
<div class="t" style="left:13px;width:87px;text-align:center;top:227px;font-size:12px;letter-spacing:-0.300px">Libraries</div>
<svg style="left:40px;top:253px" width="32" height="32"><path d="M3 9l6-2v16l-6-1.500z" fill="#d8dce0" stroke="#9aa" stroke-width="0.800"/><rect x="4" y="11" width="2" height="1.500" fill="#3a9a3a"/><path d="M9.500 2.500l19 3.500v15.500l-19 2z" fill="#1036a4" stroke="#c4ccd4" stroke-width="1.600"/><path d="M11 4.500l8 1.500l-5 16l-3 0.300z" fill="#4a84ec"/><path d="M22 7l5 1v6z" fill="#3a6cd8"/><path d="M15 23h6v3.500h-6z" fill="#b8c0c8"/><ellipse cx="18" cy="28" rx="9" ry="2.600" fill="#e0e4e8" stroke="#9aa" stroke-width="0.800"/></svg>
<div class="t" style="left:13px;width:87px;text-align:center;top:287px;font-size:12px;letter-spacing:-0.300px">This PC</div>
<svg style="left:40px;top:311px" width="32" height="32"><circle cx="12" cy="12" r="10.500" fill="url(#glb)" stroke="#1a5aa8" stroke-width="0.800"/><path d="M5 6q4-4 9-2q2 4-2 6q-3 3-6 1q-3-2-1-5zM12 15q4-2 6 1q0 4-4 6q-3-2-2-7zM3 14q3 1 3 4l-1 2q-2-2-2-6z" fill="#4ab04a"/><path d="M13.500 10.500l15.500 2.500v12l-15.500 1.500z" fill="#1036a4" stroke="#cfd6de" stroke-width="1.500"/><path d="M15 12.500l7 1l-4 11.500l-3 0.300z" fill="#4a84ec"/><path d="M19 26.500h5v2.500h-5z" fill="#b8c0c8"/><ellipse cx="21.500" cy="30" rx="7" ry="1.800" fill="#e0e4e8" stroke="#9aa" stroke-width="0.600"/></svg>
<div class="t" style="left:13px;width:87px;text-align:center;top:347px;font-size:12px;letter-spacing:-0.300px">Network</div>
<div class="a" style="left:106px;top:66px;width:523px;height:283px;background:#fff;overflow:hidden">
<div class="a" style="left:0;top:0;width:506px;height:23px;background:#fafbfc;border-bottom:1px solid #e8edf3"></div>
<div class="a" style="left:185px;top:0;width:1px;height:23px;background:#e2e8f0"></div>
<div class="a" style="left:305px;top:0;width:1px;height:23px;background:#e2e8f0"></div>
<div class="a" style="left:425px;top:0;width:1px;height:23px;background:#e2e8f0"></div>
<div class="a" style="left:506px;top:0;width:1px;height:23px;background:#e2e8f0"></div>
<div class="t" style="left:6px;top:6px;font-size:12px;letter-spacing:-0.300px">Name</div>
<div class="t" style="left:192px;top:6px;font-size:12px;letter-spacing:-0.300px">Date modified</div>
<div class="t" style="left:312px;top:6px;font-size:12px;letter-spacing:-0.300px">Type</div>
<div class="t" style="left:432px;top:6px;font-size:12px;letter-spacing:-0.300px">Size</div>
<svg style="left:240px;top:0" width="9" height="5"><path d="M0 0h8L4 4z" fill="#a8c8e8"/></svg>
<div class="a" style="left:4px;top:62px;width:502px;height:19px;background:#f5f5f5;border:1px solid #dcdcdc"></div>
<svg style="left:8px;top:25px" width="16" height="16"><rect width="16" height="16" fill="#ec6c60"/><path d="M6 3L16 13V16H9L3 10V6Z" fill="#cc544a"/><path d="M4 8.500V5.500q0-2.500 3-2.500M2.500 6.500h4" fill="none" stroke="#fff" stroke-width="1.500"/><path d="M7.500 4.500l2 1" stroke="#fff" stroke-width="1.200"/><path d="M6.500 12.500v2.500M8.500 13.500v1.500M10.500 12.500v2.500M12.500 13.500v1.500M14.500 12.500v2.500" stroke="#fff" stroke-width="0.900"/></svg>
<div class="t" style="left:26px;top:28px;font-size:12px;letter-spacing:-0.300px">end_carriage_study.dwg</div>
<div class="t" style="left:192px;top:28px;font-size:12px;letter-spacing:-0.300px">7/30/2015 7:00 AM</div>
<div class="t" style="left:312px;top:28px;font-size:12px;letter-spacing:-0.300px">IntelliCAD Drawing</div>
<div class="t" style="left:425px;width:73px;text-align:right;top:28px;font-size:12px;letter-spacing:-0.300px">2,561 KB</div>
<svg style="left:8px;top:44px" width="16" height="16"><rect width="16" height="16" fill="#ec6c60"/><path d="M6 3L16 13V16H9L3 10V6Z" fill="#cc544a"/><path d="M4 8.500V5.500q0-2.500 3-2.500M2.500 6.500h4" fill="none" stroke="#fff" stroke-width="1.500"/><path d="M7.500 4.500l2 1" stroke="#fff" stroke-width="1.200"/><path d="M6.500 12.500v2.500M8.500 13.500v1.500M10.500 12.500v2.500M12.500 13.500v1.500M14.500 12.500v2.500" stroke="#fff" stroke-width="0.900"/></svg>
<div class="t" style="left:26px;top:47px;font-size:12px;letter-spacing:-0.300px">flexcrane_doube_girder_cra...</div>
<div class="t" style="left:192px;top:47px;font-size:12px;letter-spacing:-0.300px">7/28/2015 8:39 PM</div>
<div class="t" style="left:312px;top:47px;font-size:12px;letter-spacing:-0.300px">IntelliCAD Drawing</div>
<div class="t" style="left:425px;width:73px;text-align:right;top:47px;font-size:12px;letter-spacing:-0.300px">2,472 KB</div>
<svg style="left:8px;top:63px" width="16" height="16"><rect width="16" height="16" fill="#ec6c60"/><path d="M6 3L16 13V16H9L3 10V6Z" fill="#cc544a"/><path d="M4 8.500V5.500q0-2.500 3-2.500M2.500 6.500h4" fill="none" stroke="#fff" stroke-width="1.500"/><path d="M7.500 4.500l2 1" stroke="#fff" stroke-width="1.200"/><path d="M6.500 12.500v2.500M8.500 13.500v1.500M10.500 12.500v2.500M12.500 13.500v1.500M14.500 12.500v2.500" stroke="#fff" stroke-width="0.900"/></svg>
<div class="t" style="left:26px;top:66px;font-size:12px;letter-spacing:-0.300px">girder.dwg</div>
<div class="t" style="left:192px;top:66px;font-size:12px;letter-spacing:-0.300px">7/28/2015 8:06 PM</div>
<div class="t" style="left:312px;top:66px;font-size:12px;letter-spacing:-0.300px">IntelliCAD Drawing</div>
<div class="t" style="left:425px;width:73px;text-align:right;top:66px;font-size:12px;letter-spacing:-0.300px">3,670 KB</div>
<svg style="left:8px;top:82px" width="16" height="16"><rect width="16" height="16" fill="#ec6c60"/><path d="M6 3L16 13V16H9L3 10V6Z" fill="#cc544a"/><path d="M4 8.500V5.500q0-2.500 3-2.500M2.500 6.500h4" fill="none" stroke="#fff" stroke-width="1.500"/><path d="M7.500 4.500l2 1" stroke="#fff" stroke-width="1.200"/><path d="M6.500 12.500v2.500M8.500 13.500v1.500M10.500 12.500v2.500M12.500 13.500v1.500M14.500 12.500v2.500" stroke="#fff" stroke-width="0.900"/></svg>
<div class="t" style="left:26px;top:85px;font-size:12px;letter-spacing:-0.300px">flex500_girder.dwg</div>
<div class="t" style="left:192px;top:85px;font-size:12px;letter-spacing:-0.300px">6/5/2015 6:25 AM</div>
<div class="t" style="left:312px;top:85px;font-size:12px;letter-spacing:-0.300px">IntelliCAD Drawing</div>
<div class="t" style="left:425px;width:73px;text-align:right;top:85px;font-size:12px;letter-spacing:-0.300px">374 KB</div>
<svg style="left:8px;top:101px" width="16" height="16"><rect width="16" height="16" fill="#ec6c60"/><path d="M6 3L16 13V16H9L3 10V6Z" fill="#cc544a"/><path d="M4 8.500V5.500q0-2.500 3-2.500M2.500 6.500h4" fill="none" stroke="#fff" stroke-width="1.500"/><path d="M7.500 4.500l2 1" stroke="#fff" stroke-width="1.200"/><path d="M6.500 12.500v2.500M8.500 13.500v1.500M10.500 12.500v2.500M12.500 13.500v1.500M14.500 12.500v2.500" stroke="#fff" stroke-width="0.900"/></svg>
<div class="t" style="left:26px;top:104px;font-size:12px;letter-spacing:-0.300px">end_carriage_spherical_bear...</div>
<div class="t" style="left:192px;top:104px;font-size:12px;letter-spacing:-0.300px">5/26/2015 1:25 PM</div>
<div class="t" style="left:312px;top:104px;font-size:12px;letter-spacing:-0.300px">IntelliCAD Drawing</div>
<div class="t" style="left:425px;width:73px;text-align:right;top:104px;font-size:12px;letter-spacing:-0.300px">61 KB</div>
<svg style="left:8px;top:120px" width="16" height="16"><rect width="16" height="16" fill="#ec6c60"/><path d="M6 3L16 13V16H9L3 10V6Z" fill="#cc544a"/><path d="M4 8.500V5.500q0-2.500 3-2.500M2.500 6.500h4" fill="none" stroke="#fff" stroke-width="1.500"/><path d="M7.500 4.500l2 1" stroke="#fff" stroke-width="1.200"/><path d="M6.500 12.500v2.500M8.500 13.500v1.500M10.500 12.500v2.500M12.500 13.500v1.500M14.500 12.500v2.500" stroke="#fff" stroke-width="0.900"/></svg>
<div class="t" style="left:26px;top:123px;font-size:12px;letter-spacing:-0.300px">U_drive_trolley_v4_catalog....</div>
<div class="t" style="left:192px;top:123px;font-size:12px;letter-spacing:-0.300px">5/15/2015 7:10 PM</div>
<div class="t" style="left:312px;top:123px;font-size:12px;letter-spacing:-0.300px">IntelliCAD Drawing</div>
<div class="t" style="left:425px;width:73px;text-align:right;top:123px;font-size:12px;letter-spacing:-0.300px">966 KB</div>
<svg style="left:8px;top:139px" width="16" height="16"><rect width="16" height="16" fill="#ec6c60"/><path d="M6 3L16 13V16H9L3 10V6Z" fill="#cc544a"/><path d="M4 8.500V5.500q0-2.500 3-2.500M2.500 6.500h4" fill="none" stroke="#fff" stroke-width="1.500"/><path d="M7.500 4.500l2 1" stroke="#fff" stroke-width="1.200"/><path d="M6.500 12.500v2.500M8.500 13.500v1.500M10.500 12.500v2.500M12.500 13.500v1.500M14.500 12.500v2.500" stroke="#fff" stroke-width="0.900"/></svg>
<div class="t" style="left:26px;top:142px;font-size:12px;letter-spacing:-0.300px">U_drive_trolley_v4_3D_catal...</div>
<div class="t" style="left:192px;top:142px;font-size:12px;letter-spacing:-0.300px">5/15/2015 5:54 PM</div>
<div class="t" style="left:312px;top:142px;font-size:12px;letter-spacing:-0.300px">IntelliCAD Drawing</div>
<div class="t" style="left:425px;width:73px;text-align:right;top:142px;font-size:12px;letter-spacing:-0.300px">1,985 KB</div>
<svg style="left:8px;top:158px" width="16" height="16"><rect width="16" height="16" fill="#ec6c60"/><path d="M6 3L16 13V16H9L3 10V6Z" fill="#cc544a"/><path d="M4 8.500V5.500q0-2.500 3-2.500M2.500 6.500h4" fill="none" stroke="#fff" stroke-width="1.500"/><path d="M7.500 4.500l2 1" stroke="#fff" stroke-width="1.200"/><path d="M6.500 12.500v2.500M8.500 13.500v1.500M10.500 12.500v2.500M12.500 13.500v1.500M14.500 12.500v2.500" stroke="#fff" stroke-width="0.900"/></svg>
<div class="t" style="left:26px;top:161px;font-size:12px;letter-spacing:-0.300px">RN_pvc_housing_assembly....</div>
<div class="t" style="left:192px;top:161px;font-size:12px;letter-spacing:-0.300px">3/7/2015 6:07 PM</div>
<div class="t" style="left:312px;top:161px;font-size:12px;letter-spacing:-0.300px">IntelliCAD Drawing</div>
<div class="t" style="left:425px;width:73px;text-align:right;top:161px;font-size:12px;letter-spacing:-0.300px">777 KB</div>
<svg style="left:8px;top:177px" width="16" height="16"><rect width="16" height="16" fill="#ec6c60"/><path d="M6 3L16 13V16H9L3 10V6Z" fill="#cc544a"/><path d="M4 8.500V5.500q0-2.500 3-2.500M2.500 6.500h4" fill="none" stroke="#fff" stroke-width="1.500"/><path d="M7.500 4.500l2 1" stroke="#fff" stroke-width="1.200"/><path d="M6.500 12.500v2.500M8.500 13.500v1.500M10.500 12.500v2.500M12.500 13.500v1.500M14.500 12.500v2.500" stroke="#fff" stroke-width="0.900"/></svg>
<div class="t" style="left:26px;top:180px;font-size:12px;letter-spacing:-0.300px">U_drive_trolley_v4_1000kg_...</div>
<div class="t" style="left:192px;top:180px;font-size:12px;letter-spacing:-0.300px">2/18/2015 12:44 PM</div>
<div class="t" style="left:312px;top:180px;font-size:12px;letter-spacing:-0.300px">IntelliCAD Drawing</div>
<div class="t" style="left:425px;width:73px;text-align:right;top:180px;font-size:12px;letter-spacing:-0.300px">383 KB</div>
<svg style="left:8px;top:196px" width="16" height="16"><rect width="16" height="16" fill="#ec6c60"/><path d="M6 3L16 13V16H9L3 10V6Z" fill="#cc544a"/><path d="M4 8.500V5.500q0-2.500 3-2.500M2.500 6.500h4" fill="none" stroke="#fff" stroke-width="1.500"/><path d="M7.500 4.500l2 1" stroke="#fff" stroke-width="1.200"/><path d="M6.500 12.500v2.500M8.500 13.500v1.500M10.500 12.500v2.500M12.500 13.500v1.500M14.500 12.500v2.500" stroke="#fff" stroke-width="0.900"/></svg>
<div class="t" style="left:26px;top:199px;font-size:12px;letter-spacing:-0.300px">H_clamp_hanger.dwg</div>
<div class="t" style="left:192px;top:199px;font-size:12px;letter-spacing:-0.300px">1/8/2015 1:15 PM</div>
<div class="t" style="left:312px;top:199px;font-size:12px;letter-spacing:-0.300px">IntelliCAD Drawing</div>
<div class="t" style="left:425px;width:73px;text-align:right;top:199px;font-size:12px;letter-spacing:-0.300px">40 KB</div>
<svg style="left:8px;top:215px" width="16" height="16"><rect width="16" height="16" fill="#ec6c60"/><path d="M6 3L16 13V16H9L3 10V6Z" fill="#cc544a"/><path d="M4 8.500V5.500q0-2.500 3-2.500M2.500 6.500h4" fill="none" stroke="#fff" stroke-width="1.500"/><path d="M7.500 4.500l2 1" stroke="#fff" stroke-width="1.200"/><path d="M6.500 12.500v2.500M8.500 13.500v1.500M10.500 12.500v2.500M12.500 13.500v1.500M14.500 12.500v2.500" stroke="#fff" stroke-width="0.900"/></svg>
<div class="t" style="left:26px;top:218px;font-size:12px;letter-spacing:-0.300px">CRWPSUPTO4M.dwg</div>
<div class="t" style="left:192px;top:218px;font-size:12px;letter-spacing:-0.300px">1/6/2015 6:58 PM</div>
<div class="t" style="left:312px;top:218px;font-size:12px;letter-spacing:-0.300px">IntelliCAD Drawing</div>
<div class="t" style="left:425px;width:73px;text-align:right;top:218px;font-size:12px;letter-spacing:-0.300px">52 KB</div>
<svg style="left:8px;top:234px" width="16" height="16"><rect width="16" height="16" fill="#ec6c60"/><path d="M6 3L16 13V16H9L3 10V6Z" fill="#cc544a"/><path d="M4 8.500V5.500q0-2.500 3-2.500M2.500 6.500h4" fill="none" stroke="#fff" stroke-width="1.500"/><path d="M7.500 4.500l2 1" stroke="#fff" stroke-width="1.200"/><path d="M6.500 12.500v2.500M8.500 13.500v1.500M10.500 12.500v2.500M12.500 13.500v1.500M14.500 12.500v2.500" stroke="#fff" stroke-width="0.900"/></svg>
<div class="t" style="left:26px;top:237px;font-size:12px;letter-spacing:-0.300px">flexcrane_500_crane.dwg</div>
<div class="t" style="left:192px;top:237px;font-size:12px;letter-spacing:-0.300px">11/11/2014 1:08 PM</div>
<div class="t" style="left:312px;top:237px;font-size:12px;letter-spacing:-0.300px">IntelliCAD Drawing</div>
<div class="t" style="left:425px;width:73px;text-align:right;top:237px;font-size:12px;letter-spacing:-0.300px">199 KB</div>
<svg style="left:8px;top:253px" width="16" height="16"><rect width="16" height="16" fill="#ec6c60"/><path d="M6 3L16 13V16H9L3 10V6Z" fill="#cc544a"/><path d="M4 8.500V5.500q0-2.500 3-2.500M2.500 6.500h4" fill="none" stroke="#fff" stroke-width="1.500"/><path d="M7.500 4.500l2 1" stroke="#fff" stroke-width="1.200"/><path d="M6.500 12.500v2.500M8.500 13.500v1.500M10.500 12.500v2.500M12.500 13.500v1.500M14.500 12.500v2.500" stroke="#fff" stroke-width="0.900"/></svg>
<div class="t" style="left:26px;top:256px;font-size:12px;letter-spacing:-0.300px">flex500_curves.dwg</div>
<div class="t" style="left:192px;top:256px;font-size:12px;letter-spacing:-0.300px">11/3/2014 7:10 AM</div>
<div class="t" style="left:312px;top:256px;font-size:12px;letter-spacing:-0.300px">IntelliCAD Drawing</div>
<div class="t" style="left:425px;width:73px;text-align:right;top:256px;font-size:12px;letter-spacing:-0.300px">68 KB</div>
<svg style="left:8px;top:272px" width="16" height="16"><rect width="16" height="16" fill="#ec6c60"/><path d="M6 3L16 13V16H9L3 10V6Z" fill="#cc544a"/><path d="M4 8.500V5.500q0-2.500 3-2.500M2.500 6.500h4" fill="none" stroke="#fff" stroke-width="1.500"/><path d="M7.500 4.500l2 1" stroke="#fff" stroke-width="1.200"/><path d="M6.500 12.500v2.500M8.500 13.500v1.500M10.500 12.500v2.500M12.500 13.500v1.500M14.500 12.500v2.500" stroke="#fff" stroke-width="0.900"/></svg>
<div class="t" style="left:26px;top:275px;font-size:12px;letter-spacing:-0.300px">girder_top_4m.dwg</div>
<div class="t" style="left:192px;top:275px;font-size:12px;letter-spacing:-0.300px">10/29/2014 6:36 AM</div>
<div class="t" style="left:312px;top:275px;font-size:12px;letter-spacing:-0.300px">IntelliCAD Drawing</div>
<div class="t" style="left:425px;width:73px;text-align:right;top:275px;font-size:12px;letter-spacing:-0.300px">21 KB</div>
<div class="a" style="left:506px;top:0;width:17px;height:283px;background:#f0f0f0"></div>
<div class="a" style="left:507px;top:17px;width:15px;height:50px;background:#cdcdcd"></div>
<svg style="left:509px;top:5px" width="12" height="275"><path d="M2 7l4-4l4 4M2 267l4 4l4-4" fill="none" stroke="#505050" stroke-width="1.600"/></svg>
</div>
<div class="t" style="left:108px;top:364px;font-size:11px;letter-spacing:-0.150px;margin-top:1px">File name:</div>
<div class="t" style="left:108px;top:390px;font-size:11px;letter-spacing:-0.150px;margin-top:1px">Files of type:</div>
<div class="a" style="left:202px;top:359px;width:320px;height:21px;background:#fff;border:1px solid #ababab"></div>
<div class="t" style="left:206px;top:364px;font-size:11px;letter-spacing:-0.150px;margin-top:1px">girder.dwg</div>
<svg style="left:508px;top:366px" width="10" height="8"><path d="M1 1.500l4 4l4-4" fill="none" stroke="#444" stroke-width="1.500"/></svg>
<div class="a" style="left:202px;top:386px;width:320px;height:21px;background:linear-gradient(#ebf4fc,#c4def6);border:1px solid #3c7fb1"></div>
<div class="t" style="left:206px;top:391px;font-size:11px;letter-spacing:-0.150px;margin-top:1px">Standard Drawing File (*.dwg)</div>
<svg style="left:508px;top:393px" width="10" height="8"><path d="M1 1.500l4 4l4-4" fill="none" stroke="#444" stroke-width="1.500"/></svg>
<div class="a" style="left:556px;top:359px;width:73px;height:21px;background:linear-gradient(#f2f7fc,#dcebf8);border:1px solid #3399ff"></div>
<div class="t" style="left:556px;width:73px;text-align:center;top:364px;font-size:11px;letter-spacing:-0.150px;margin-top:1px">Open</div>
<div class="a" style="left:556px;top:385px;width:73px;height:21px;background:linear-gradient(#f0f0f0,#e5e5e5);border:1px solid #acacac"></div>
<div class="t" style="left:556px;width:73px;text-align:center;top:390px;font-size:11px;letter-spacing:-0.150px;margin-top:1px">Cancel</div>
<div class="a" style="left:644px;top:67px;width:198px;height:100px;border:1px solid #dcdcdc"></div>
<div class="t" style="left:650px;top:61px;font-size:11px;letter-spacing:-0.150px;margin-top:1px;background:#f0f0f0;padding:0 2px">Description</div>
<div class="t" style="left:653px;top:83px;font-size:11px;letter-spacing:-0.150px;margin-top:1px">Size:</div><div class="t" style="left:720px;top:83px;font-size:11px;letter-spacing:-0.150px;margin-top:1px">3757856 bytes</div>
<div class="t" style="left:653px;top:104px;font-size:11px;letter-spacing:-0.150px;margin-top:1px">Created:</div><div class="t" style="left:720px;top:104px;font-size:11px;letter-spacing:-0.150px;margin-top:1px">9/6/2013 8:36 AM</div>
<div class="t" style="left:653px;top:125px;font-size:11px;letter-spacing:-0.150px;margin-top:1px">Modified:</div><div class="t" style="left:720px;top:125px;font-size:11px;letter-spacing:-0.150px;margin-top:1px">7/28/2015 8:06 PM</div>
<div class="t" style="left:653px;top:146px;font-size:11px;letter-spacing:-0.150px;margin-top:1px">Accessed:</div><div class="t" style="left:720px;top:146px;font-size:11px;letter-spacing:-0.150px;margin-top:1px">8/23/2015 2:38 PM</div>
<div class="a" style="left:653px;top:182px;width:13px;height:13px;background:#fff;border:1px solid #333"></div>
<div class="t" style="left:669px;top:183px;font-size:11px;letter-spacing:-0.150px;margin-top:1px;color:#000">Open as read-only</div>
<div class="a" style="left:653px;top:203px;width:13px;height:13px;background:#e6e6e6;border:1px solid #bcbcbc"></div>
<div class="t" style="left:669px;top:204px;font-size:11px;letter-spacing:-0.150px;margin-top:1px;color:#838383">Password protect</div>
<div class="a" style="left:653px;top:224px;width:13px;height:13px;background:#fff;border:1px solid #333"></div>
<svg style="left:655px;top:226px" width="10" height="10"><path d="M1 4.500l2.500 3l5-6.500" fill="none" stroke="#111" stroke-width="1.700"/></svg>
<div class="t" style="left:669px;top:225px;font-size:11px;letter-spacing:-0.150px;margin-top:1px;color:#000">Use preview</div>
<div class="a" style="left:644px;top:258px;width:194px;height:130px;border:1px solid #dcdcdc"></div>
<div class="t" style="left:650px;top:252px;font-size:11px;letter-spacing:-0.150px;margin-top:1px;background:#f0f0f0;padding:0 2px">Preview</div>
<svg style="left:650px;top:283px;background:#000" width="180" height="85" viewBox="0 0 180 85"><defs><pattern id="pg" width="4" height="4" patternUnits="userSpaceOnUse"><path d="M0 0.500H4M0.500 0V4" stroke="#202020" stroke-width="1"/></pattern></defs><rect width="180" height="85" fill="url(#pg)"/><rect x="32.500" y="1.500" width="115" height="82" fill="#000" stroke="#fff" stroke-width="1.400" stroke-dasharray="6 1"/><path d="M0 84.500H180" stroke="#c01818" stroke-width="1"/><path d="M32 2V84" stroke="#2a9a2a" stroke-width="1"/><rect x="36" y="12" width="34" height="34" fill="none" stroke="#b01c1c"/><rect x="42" y="56" width="17" height="22" fill="none" stroke="#b01c1c"/><path d="M46 75L134 24l3 5L50 80z" fill="#fff"/><path d="M40 20h18l6-4l4 10l-10 8l-14 2z" fill="#fff"/><path d="M117 30l16-8v22l-10 6z" fill="#fff"/><path d="M44 14l10 12l12 10M92 60l10-4l12-8l14-10l8-14" fill="none" stroke="#1ab0b0" stroke-width="1.200" stroke-dasharray="2 2"/><g fill="#1ab0b0"><circle cx="46" cy="14" r="1.500"/><circle cx="56" cy="12" r="1.500"/><circle cx="62" cy="24" r="1.500"/><circle cx="66" cy="36" r="1.500"/><circle cx="94" cy="60" r="1.500"/><circle cx="104" cy="56" r="1.500"/><circle cx="116" cy="47" r="1.500"/><circle cx="126" cy="38" r="1.500"/><circle cx="136" cy="24" r="1.500"/><circle cx="52" cy="78" r="1.500"/></g><path d="M56 30l8-6" stroke="#2ac02a" stroke-width="1.200"/><g fill="#fff"><rect x="80" y="8" width="14" height="5"/><rect x="106" y="8" width="12" height="5"/><rect x="80" y="17" width="12" height="3"/><rect x="80" y="24" width="10" height="4"/><rect x="60" y="52" width="12" height="5"/><rect x="96" y="62" width="10" height="6" fill="none" stroke="#fff"/></g><g stroke="#fff" stroke-width="1"><path d="M112 54h34M112 58h34M112 62h34M112 66h34M96 70h50M96 74h50M96 78h50M112 54v28M120 54v28M130 54v28M138 54v28M96 70v12"/></g></svg>
<svg style="left:841px;top:412px" width="9" height="9" shape-rendering="crispEdges"><path d="M6 0h2v2h-2zM3 3h2v2h-2zM6 3h2v2h-2zM0 6h2v2h-2zM3 6h2v2h-2zM6 6h2v2h-2z" fill="#b4b4b4"/></svg>
<div class="a" style="left:202px;top:407px;width:320px;height:93px;background:#fff;border:1px solid #2a7fd6"></div>
<div class="a" style="left:203px;top:408px;width:318px;height:13px;background:#3399ff"></div>
<div class="t" style="left:205px;top:409px;font-size:11px;letter-spacing:-0.150px;margin-top:1px;color:#fff">Standard Drawing File (*.dwg)</div>
<div class="t" style="left:205px;top:422px;font-size:11px;letter-spacing:-0.150px;margin-top:1px;color:#000">Drawing Exchange Format (*.dxf)</div>
<div class="t" style="left:205px;top:435px;font-size:11px;letter-spacing:-0.150px;margin-top:1px;color:#000">Binary Exchange Format (*.dxb)</div>
<div class="t" style="left:205px;top:448px;font-size:11px;letter-spacing:-0.150px;margin-top:1px;color:#000">Design Web Format (*.dwf)</div>
<div class="t" style="left:205px;top:461px;font-size:11px;letter-spacing:-0.150px;margin-top:1px;color:#000">Drawing Template (*.dwt)</div>
<div class="t" style="left:205px;top:474px;font-size:11px;letter-spacing:-0.150px;margin-top:1px;color:#000">MicroStation Design File (*.dgn)</div>
<div class="t" style="left:205px;top:487px;font-size:11px;letter-spacing:-0.150px;margin-top:1px;color:#000">Collada file (*.dae)</div>
</div>
</body></html>
